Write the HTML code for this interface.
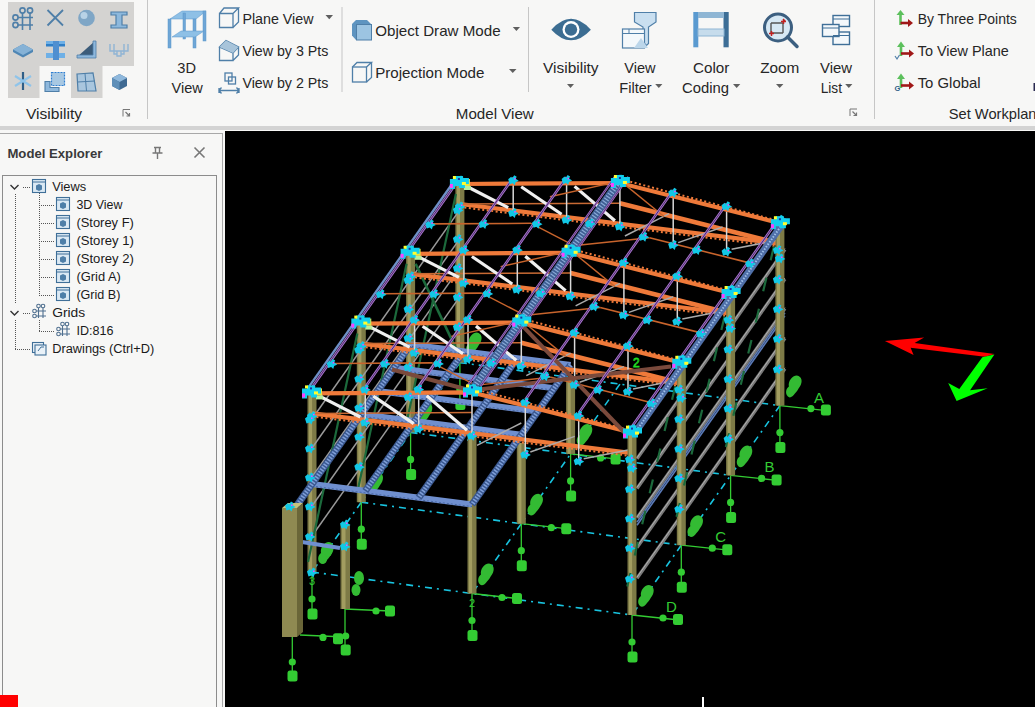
<!DOCTYPE html><html><head><meta charset="utf-8"><style>html,body{margin:0;padding:0;overflow:hidden;background:#f7f7f6}svg{display:block}</style></head><body>
<svg width="1035" height="707" viewBox="0 0 1035 707">
<rect x="0" y="0" width="1035" height="126" fill="#f7f7f6"/><rect x="0" y="126" width="1035" height="4" fill="#d3d3d3"/><rect x="8" y="2" width="126" height="96" fill="#d4d3d1"/><rect x="39.5" y="66" width="31.5" height="32" fill="#f7f7f6"/><rect x="102.5" y="66" width="31.5" height="32" fill="#f7f7f6"/><rect x="147.0" y="0" width="1" height="119" fill="#c6c6c6"/><rect x="341.5" y="7" width="1" height="85" fill="#c6c6c6"/><rect x="528.0" y="7" width="1" height="85" fill="#c6c6c6"/><rect x="874.0" y="0" width="1" height="119" fill="#c6c6c6"/><text x="26" y="118.6" font-family="Liberation Sans" font-size="14.5" fill="#262626" font-weight="normal" textLength="56" lengthAdjust="spacingAndGlyphs" >Visibility</text><text x="455.8" y="118.8" font-family="Liberation Sans" font-size="14.5" fill="#262626" font-weight="normal" textLength="78" lengthAdjust="spacingAndGlyphs" >Model View</text><text x="948.7" y="118.8" font-family="Liberation Sans" font-size="14.5" fill="#262626" font-weight="normal" textLength="96" lengthAdjust="spacingAndGlyphs" >Set Workplane</text><text x="177.3" y="73" font-family="Liberation Sans" font-size="14.5" fill="#262626" font-weight="normal" textLength="18.7" lengthAdjust="spacingAndGlyphs" >3D</text><text x="171.5" y="92.8" font-family="Liberation Sans" font-size="14.5" fill="#262626" font-weight="normal" textLength="31.3" lengthAdjust="spacingAndGlyphs" >View</text><text x="242.4" y="23.8" font-family="Liberation Sans" font-size="14.5" fill="#262626" font-weight="normal" textLength="71.1" lengthAdjust="spacingAndGlyphs" >Plane View</text><text x="242.4" y="56" font-family="Liberation Sans" font-size="14.5" fill="#262626" font-weight="normal" textLength="86" lengthAdjust="spacingAndGlyphs" >View by 3 Pts</text><text x="242.4" y="88" font-family="Liberation Sans" font-size="14.5" fill="#262626" font-weight="normal" textLength="86" lengthAdjust="spacingAndGlyphs" >View by 2 Pts</text><text x="375.2" y="36.1" font-family="Liberation Sans" font-size="14.5" fill="#262626" font-weight="normal" textLength="125.4" lengthAdjust="spacingAndGlyphs" >Object Draw Mode</text><text x="375.2" y="77.9" font-family="Liberation Sans" font-size="14.5" fill="#262626" font-weight="normal" textLength="109.2" lengthAdjust="spacingAndGlyphs" >Projection Mode</text><text x="543" y="73.4" font-family="Liberation Sans" font-size="14.5" fill="#262626" font-weight="normal" textLength="55.6" lengthAdjust="spacingAndGlyphs" >Visibility</text><text x="624.3" y="73.4" font-family="Liberation Sans" font-size="14.5" fill="#262626" font-weight="normal" textLength="31.3" lengthAdjust="spacingAndGlyphs" >View</text><text x="619.3" y="92.8" font-family="Liberation Sans" font-size="14.5" fill="#262626" font-weight="normal" textLength="32.4" lengthAdjust="spacingAndGlyphs" >Filter</text><text x="693" y="73.4" font-family="Liberation Sans" font-size="14.5" fill="#262626" font-weight="normal" textLength="36.3" lengthAdjust="spacingAndGlyphs" >Color</text><text x="682" y="93" font-family="Liberation Sans" font-size="14.5" fill="#262626" font-weight="normal" textLength="47" lengthAdjust="spacingAndGlyphs" >Coding</text><text x="760.2" y="73.4" font-family="Liberation Sans" font-size="14.5" fill="#262626" font-weight="normal" textLength="39.2" lengthAdjust="spacingAndGlyphs" >Zoom</text><text x="820" y="73.4" font-family="Liberation Sans" font-size="14.5" fill="#262626" font-weight="normal" textLength="32" lengthAdjust="spacingAndGlyphs" >View</text><text x="820.7" y="93" font-family="Liberation Sans" font-size="14.5" fill="#262626" font-weight="normal" textLength="21.3" lengthAdjust="spacingAndGlyphs" >List</text><text x="917.7" y="23.9" font-family="Liberation Sans" font-size="14.5" fill="#262626" font-weight="normal" textLength="99.1" lengthAdjust="spacingAndGlyphs" >By Three Points</text><text x="917.7" y="55.7" font-family="Liberation Sans" font-size="14.5" fill="#262626" font-weight="normal" textLength="91.1" lengthAdjust="spacingAndGlyphs" >To View Plane</text><text x="917.7" y="87.9" font-family="Liberation Sans" font-size="14.5" fill="#262626" font-weight="normal" textLength="62.8" lengthAdjust="spacingAndGlyphs" >To Global</text><polygon points="325.5,15 333,15 329.25,19.3" fill="#5f5f5f"/><polygon points="512.8,27 520,27 516.4,31" fill="#5f5f5f"/><polygon points="509,69 516.5,69 512.75,73" fill="#5f5f5f"/><polygon points="567,84 574,84 570.5,88" fill="#5f5f5f"/><polygon points="655.2,84 662.4,84 658.8,88" fill="#5f5f5f"/><polygon points="733,84 740.3,84 736.65,88" fill="#5f5f5f"/><polygon points="776,84 783.4,84 779.7,88" fill="#5f5f5f"/><polygon points="845.2,84 852.4,84 848.8,88" fill="#5f5f5f"/><path d="M123 116.5V109.5H130" fill="none" stroke="#777" stroke-width="1"/><path d="M125.5 112.0L129.5 116.0M129.5 113.0V116.0H126.5" fill="none" stroke="#777" stroke-width="1.2"/><path d="M850 116V109H857" fill="none" stroke="#777" stroke-width="1"/><path d="M852.5 111.5L856.5 115.5M856.5 112.5V115.5H853.5" fill="none" stroke="#777" stroke-width="1.2"/>
<g fill="none" stroke="#4f7fa8" stroke-width="1.6">
 <path d="M17.5 17.5H33M17.5 25H33M22.5 13v17M30 13v17"/>
 <circle cx="22.5" cy="10.5" r="2.6"/><circle cx="30" cy="10.5" r="2.6"/>
 <circle cx="15.5" cy="17.5" r="2.6"/><circle cx="15.5" cy="25" r="2.6"/>
 <path d="M47.5 10L63 25.5M63 10L47.5 25.5" stroke-width="1.8"/>
</g>
<circle cx="86.5" cy="18" r="8.3" fill="#7fa6c6"/><circle cx="84" cy="15.5" r="3.5" fill="#b8d2e6"/>
<path d="M111 12h16v3h-5v10h5v3h-16v-3h5v-10h-5z" fill="#8db8dc" stroke="#4f7fa8" stroke-width="1.2"/>
<path d="M13 49.5L23 44L33 49.5V52L23 57.5L13 52z" fill="#4f86b4"/><path d="M13 49.5L23 44L33 49.5L23 55z" fill="#86b2d6"/>
<rect x="46" y="41" width="19" height="5" fill="#6fb0e6"/><rect x="46" y="44" width="19" height="2.5" fill="#2f7fc8"/><rect x="46" y="53" width="19" height="5" fill="#6fb0e6"/><rect x="53" y="41" width="6" height="19" fill="#4f8fd0"/>
<path d="M77 57L95 41V57z" fill="#3c5c7a"/><path d="M93 41h3v17H77v-3h16z" fill="#8fb8dc" stroke="#4f7fa8" stroke-width="0.8"/>
<path d="M110 44v7h18v-7M114 44v10h3M124 44v10h-3M117 51v5h4v-5" fill="none" stroke="#90b4d4" stroke-width="1.4"/>
<path d="M23 72v18" stroke="#2f5f88" stroke-width="2.2"/><path d="M15 76L31 86M15 86L31 76" stroke="#8fc4ea" stroke-width="2.2"/>
<rect x="51.5" y="72.5" width="13" height="13" fill="#a8c8e2" stroke="#2f7fd0" stroke-width="1.2" stroke-dasharray="2 1"/>
<path d="M45 81.5h5v6h9v4H45z" fill="#8fb8dc" stroke="#4f7fa8" stroke-width="1.1"/>
<path d="M77 74L93 73L96 91L78 91z" fill="#a9c6de" stroke="#4f7fa8" stroke-width="1.2"/><path d="M85 73.5L86.5 91M77.5 82L95 81" stroke="#4f7fa8" stroke-width="1"/>
<path d="M112 78L119.5 74L127 78V86L119.5 90L112 86z" fill="#3f6a92"/><path d="M112 78L119.5 74L127 78L119.5 82z" fill="#8fb8dc"/><path d="M112 78L119.5 82V90L112 86z" fill="#5f8fb8"/>
<!-- 3D view -->
<g fill="#6fa6d6" stroke="#5a96ca" stroke-width="0.5">
<path d="M170 19L182 11H206L196 19z" fill="#8ec0e6"/>
<rect x="168" y="19" width="3" height="29"/><rect x="193" y="19" width="3" height="29"/><rect x="203" y="11" width="3" height="30"/><rect x="183" y="13" width="2.5" height="26"/>
<path d="M172 37L181 31H204L195 37z" fill="#8ec0e6"/>
</g>
<!-- plane view cube -->
<g fill="none" stroke="#4f7fa8" stroke-width="1.3">
<path d="M219.5 13.5h13.5v14h-13.5zM219.5 13.5L224 8h14.5L233 13.5M238.5 8v14L233 27.5"/>
<path d="M219.5 47L226 40.5L238.5 47L233 53zM219.5 47v13.5h13.5V53M238.5 47v8L233 60.5" />
<rect x="225" y="73" width="7" height="8"/><rect x="228.5" y="77" width="7" height="7"/>
<path d="M219 90.5h20M221.5 87.5l-2.5 3 2.5 3M236.5 87.5l2.5 3-2.5 3M219 88v5M239 88v5"/>
</g>
<path d="M219.5 47L226 40.5L238.5 47L233 53z" fill="#a8c4da"/>
<!-- object draw mode -->
<path d="M352 24L356 20H367L371.5 24.5V40H356L352 35.5z" fill="#5e94c0"/><rect x="356.5" y="24.5" width="15" height="15.5" fill="#9cc4e2" stroke="#4f7fa8"/>
<g fill="none" stroke="#4f7fa8" stroke-width="1.3"><rect x="352.5" y="67" width="14" height="15"/><path d="M352.5 67L357 62.5H371.5L366.5 67M371.5 62.5V77.5L366.5 82"/></g>
<!-- eye -->
<path d="M551.3 29.7Q571 8 590.9 29.7Q571 51 551.3 29.7z" fill="#3c6d92"/>
<circle cx="571" cy="29.6" r="8.5" fill="#fff"/><circle cx="571" cy="29.6" r="6.2" fill="#3c6d92"/>
<!-- view filter -->
<path d="M634.5 12.5h21.5v9.5l-7.5 5v16.5l-2 2l-3.5-3.5V27l-8.5-5z" fill="#c9dff0" stroke="#4f7fa8" stroke-width="1.2"/>
<rect x="622.5" y="29" width="22" height="19" fill="#f4f8fb" stroke="#4f7fa8" stroke-width="1.2"/><path d="M622.5 33.5h22M629 29v4.5" stroke="#4f7fa8" stroke-width="1"/>
<path d="M634 48L641 38L648 48z" fill="#bcd6ea"/>
<!-- color coding -->
<rect x="693.3" y="12" width="5" height="35.3" fill="#5a9ad0"/><rect x="723.5" y="12" width="5.2" height="35.3" fill="#3d6e96"/>
<rect x="698" y="12" width="26" height="6" fill="#8fb6d4"/><rect x="698" y="29" width="26" height="7" fill="#c6dcec" stroke="#8fb6d4" stroke-width="1"/>
<!-- zoom -->
<circle cx="778" cy="27.5" r="13.5" fill="#d6e8f4" stroke="#3c5f80" stroke-width="3"/>
<path d="M787.5 37L797 46.5" stroke="#3c5f80" stroke-width="3.5" stroke-linecap="round"/>
<path d="M771 23v10h12M771 23h12v10" fill="none" stroke="#555" stroke-width="1.4"/>
<path d="M785.5 21.5l-2.5-2.5M781 21.5h5M783.5 19v5M769 33.5h5M771.5 31v5" stroke="#c02020" stroke-width="1.5"/>
<!-- view list -->
<g fill="#f4f8fb" stroke="#3f6f98" stroke-width="1.4">
<rect x="833" y="15.5" width="16.5" height="11"/><rect x="833" y="32" width="16.5" height="12.5"/><rect x="822.5" y="24.5" width="16.5" height="12"/>
</g>
<path d="M833 19h16.5M822.5 28h16.5M833 35.5h16.5" stroke="#3f6f98" stroke-width="1.2"/>
<!-- workplane icons -->
<g stroke-width="2.6" fill="none">
<path d="M900.5 25V13" stroke="#5cc05c"/><path d="M900.5 23H909" stroke="#a01818"/>
<path d="M901 56V45" stroke="#5cc05c"/><path d="M901 53.5H910" stroke="#a01818"/>
<path d="M901 88V77" stroke="#5cc05c"/><path d="M901 85.5H910" stroke="#a01818"/>
</g>
<g fill="#5cc05c"><path d="M896.5 15L900.5 10L904.5 15z"/><path d="M897 47L901 41.5L905 47z"/><path d="M897 79L901 73.5L905 79z"/></g>
<g fill="#a01818"><path d="M908 19L913 23L908 27z"/><path d="M909 49.5L914 53.5L909 57.5z"/><path d="M909 81.5L914 85.5L909 89.5z"/></g>
<path d="M895 56l2 3 2.5-4" fill="none" stroke="#4f7fa8" stroke-width="1.2"/>
<text x="894.5" y="90.5" font-family="Liberation Sans" font-size="7.5" font-weight="bold" fill="#2f5f88">G</text>
<rect x="1033.5" y="83" width="1.5" height="8" fill="#2a2a50"/>

<rect x="0" y="130" width="225" height="577" fill="#f7f7f6"/><rect x="0" y="133" width="223" height="1" fill="#a8a8a8"/><rect x="222" y="133" width="1" height="574" fill="#a8a8a8"/><rect x="2" y="175" width="215" height="1" fill="#8c8c8c"/><rect x="2" y="175" width="1" height="532" fill="#8c8c8c"/><rect x="216" y="175" width="1" height="532" fill="#8c8c8c"/><text x="7.4" y="157.9" font-family="Liberation Sans" font-size="13" fill="#3a3a3a" font-weight="bold" textLength="95" lengthAdjust="spacingAndGlyphs" >Model Explorer</text><path d="M154 147.5h7M155.5 147.5v5.5M159.5 147.5v5.5M152.5 153h10M157.5 153v6" fill="none" stroke="#777" stroke-width="1.4"/><path d="M194.5 147.5L204.5 157.5M204.5 147.5L194.5 157.5" stroke="#777" stroke-width="1.6"/><text x="52.2" y="190.8" font-family="Liberation Sans" font-size="12.5" fill="#1a1a1a" font-weight="normal" textLength="34" lengthAdjust="spacingAndGlyphs" >Views</text><rect x="32.5" y="179.5" width="13" height="13" fill="#dbe9f4" stroke="#3f6f98" stroke-width="1.1"/><path d="M32.5 182h13" stroke="#3f6f98" stroke-width="1"/><path d="M36 185.5l3-1.5 3 1.5v4l-3 1.5-3-1.5z" fill="#4f7fa8"/><text x="76.4" y="208.8" font-family="Liberation Sans" font-size="12.5" fill="#1a1a1a" font-weight="normal" textLength="46" lengthAdjust="spacingAndGlyphs" >3D View</text><rect x="56.5" y="197.5" width="13" height="13" fill="#dbe9f4" stroke="#3f6f98" stroke-width="1.1"/><path d="M56.5 200h13" stroke="#3f6f98" stroke-width="1"/><path d="M60 203.5l3-1.5 3 1.5v4l-3 1.5-3-1.5z" fill="#4f7fa8"/><text x="76.4" y="226.8" font-family="Liberation Sans" font-size="12.5" fill="#1a1a1a" font-weight="normal" textLength="57.5" lengthAdjust="spacingAndGlyphs" >(Storey F)</text><rect x="56.5" y="215.5" width="13" height="13" fill="#dbe9f4" stroke="#3f6f98" stroke-width="1.1"/><path d="M56.5 218h13" stroke="#3f6f98" stroke-width="1"/><path d="M60 221.5l3-1.5 3 1.5v4l-3 1.5-3-1.5z" fill="#4f7fa8"/><text x="76.4" y="244.8" font-family="Liberation Sans" font-size="12.5" fill="#1a1a1a" font-weight="normal" textLength="57.5" lengthAdjust="spacingAndGlyphs" >(Storey 1)</text><rect x="56.5" y="233.5" width="13" height="13" fill="#dbe9f4" stroke="#3f6f98" stroke-width="1.1"/><path d="M56.5 236h13" stroke="#3f6f98" stroke-width="1"/><path d="M60 239.5l3-1.5 3 1.5v4l-3 1.5-3-1.5z" fill="#4f7fa8"/><text x="76.4" y="262.8" font-family="Liberation Sans" font-size="12.5" fill="#1a1a1a" font-weight="normal" textLength="57.5" lengthAdjust="spacingAndGlyphs" >(Storey 2)</text><rect x="56.5" y="251.5" width="13" height="13" fill="#dbe9f4" stroke="#3f6f98" stroke-width="1.1"/><path d="M56.5 254h13" stroke="#3f6f98" stroke-width="1"/><path d="M60 257.5l3-1.5 3 1.5v4l-3 1.5-3-1.5z" fill="#4f7fa8"/><text x="76.4" y="280.8" font-family="Liberation Sans" font-size="12.5" fill="#1a1a1a" font-weight="normal" textLength="44.5" lengthAdjust="spacingAndGlyphs" >(Grid A)</text><rect x="56.5" y="269.5" width="13" height="13" fill="#dbe9f4" stroke="#3f6f98" stroke-width="1.1"/><path d="M56.5 272h13" stroke="#3f6f98" stroke-width="1"/><path d="M60 275.5l3-1.5 3 1.5v4l-3 1.5-3-1.5z" fill="#4f7fa8"/><text x="76.4" y="298.8" font-family="Liberation Sans" font-size="12.5" fill="#1a1a1a" font-weight="normal" textLength="44" lengthAdjust="spacingAndGlyphs" >(Grid B)</text><rect x="56.5" y="287.5" width="13" height="13" fill="#dbe9f4" stroke="#3f6f98" stroke-width="1.1"/><path d="M56.5 290h13" stroke="#3f6f98" stroke-width="1"/><path d="M60 293.5l3-1.5 3 1.5v4l-3 1.5-3-1.5z" fill="#4f7fa8"/><text x="52.2" y="316.8" font-family="Liberation Sans" font-size="12.5" fill="#1a1a1a" font-weight="normal" textLength="33" lengthAdjust="spacingAndGlyphs" >Grids</text><g fill="none" stroke="#4f6f8f" stroke-width="1.1"><path d="M36 311h10M36 316h10M38.5 308v10M43 308v10"/><circle cx="38.5" cy="306" r="1.8"/><circle cx="43" cy="306" r="1.8"/><circle cx="34.5" cy="311" r="1.8"/><circle cx="34.5" cy="316" r="1.8"/></g><text x="76.4" y="334.8" font-family="Liberation Sans" font-size="12.5" fill="#1a1a1a" font-weight="normal" textLength="37" lengthAdjust="spacingAndGlyphs" >ID:816</text><g fill="none" stroke="#4f6f8f" stroke-width="1.1"><path d="M60 329h10M60 334h10M62.5 326v10M67 326v10"/><circle cx="62.5" cy="324" r="1.8"/><circle cx="67" cy="324" r="1.8"/><circle cx="58.5" cy="329" r="1.8"/><circle cx="58.5" cy="334" r="1.8"/></g><text x="52.2" y="352.8" font-family="Liberation Sans" font-size="12.5" fill="#1a1a1a" font-weight="normal" textLength="102" lengthAdjust="spacingAndGlyphs" >Drawings (Ctrl+D)</text><g fill="#eaf2f8" stroke="#3f6f98" stroke-width="1.1"><rect x="32.5" y="342.5" width="11" height="10"/><rect x="35" y="345" width="11" height="10"/></g><path d="M38 351l3-4h3" fill="none" stroke="#3f6f98"/><path d="M10.5 185L14.5 189L18.5 185" fill="none" stroke="#333" stroke-width="1.4"/><path d="M10.5 311L14.5 315L18.5 311" fill="none" stroke="#333" stroke-width="1.4"/><g stroke="#555" stroke-width="1" stroke-dasharray="1 1" fill="none"><path d="M23 187.5H31"/><path d="M23 313.5H31"/><path d="M15.5 194V304"/><path d="M15.5 320V350"/><path d="M15 349.5H31"/><path d="M39.5 193V296"/><path d="M39 205.5H55"/><path d="M39 223.5H55"/><path d="M39 241.5H55"/><path d="M39 259.5H55"/><path d="M39 277.5H55"/><path d="M39 295.5H55"/><path d="M39.5 320V332"/><path d="M39 331.5H55"/></g><rect x="0" y="695" width="18" height="12" fill="#ff0000"/>
<rect x="225" y="131" width="810" height="576" fill="#000"/><defs><clipPath id="vpc"><rect x="225" y="131" width="810" height="576"/></clipPath></defs><g clip-path="url(#vpc)" stroke-linecap="butt"><line x1="459.9" y1="362.6" x2="779.9" y2="405.6" stroke="#18c4e0" stroke-width="1.6" stroke-dasharray="7 5 2 5"/><line x1="410.6" y1="432.4" x2="730.6" y2="475.4" stroke="#18c4e0" stroke-width="1.6" stroke-dasharray="7 5 2 5"/><line x1="361.3" y1="502.2" x2="681.3" y2="545.2" stroke="#18c4e0" stroke-width="1.6" stroke-dasharray="7 5 2 5"/><line x1="312.0" y1="572.0" x2="632.0" y2="615.0" stroke="#18c4e0" stroke-width="1.6" stroke-dasharray="7 5 2 5"/><line x1="459.9" y1="362.6" x2="312.0" y2="572.0" stroke="#18c4e0" stroke-width="1.6" stroke-dasharray="7 5 2 5"/><line x1="619.9" y1="384.1" x2="472.0" y2="593.5" stroke="#18c4e0" stroke-width="1.6" stroke-dasharray="7 5 2 5"/><line x1="779.9" y1="405.6" x2="632.0" y2="615.0" stroke="#18c4e0" stroke-width="1.6" stroke-dasharray="7 5 2 5"/><line x1="459.9" y1="362.6" x2="459.9" y2="405.6" stroke="#33cc33" stroke-width="1.3" /><circle cx="459.9" cy="389.6" r="3.6" fill="#33cc33"/><rect x="455.4" y="399.1" width="10" height="11" rx="2.5" fill="#33cc33"/><path d="M467.9 353.6c-3-3-2-8 1-10c-1-5 3-11 8-11c5 1 6 6 3 11c-2 3-3 5-5 7c-2 3-5 5-7 3z" fill="#33bb33"/><line x1="779.9" y1="405.6" x2="779.9" y2="448.6" stroke="#33cc33" stroke-width="1.3" /><circle cx="779.9" cy="432.6" r="3.6" fill="#33cc33"/><rect x="775.4" y="442.1" width="10" height="11" rx="2.5" fill="#33cc33"/><path d="M787.9 396.6c-3-3-2-8 1-10c-1-5 3-11 8-11c5 1 6 6 3 11c-2 3-3 5-5 7c-2 3-5 5-7 3z" fill="#33bb33"/><line x1="410.6" y1="432.4" x2="410.6" y2="475.4" stroke="#33cc33" stroke-width="1.3" /><circle cx="410.6" cy="459.4" r="3.6" fill="#33cc33"/><rect x="406.1" y="468.9" width="10" height="11" rx="2.5" fill="#33cc33"/><path d="M418.6 423.4c-3-3-2-8 1-10c-1-5 3-11 8-11c5 1 6 6 3 11c-2 3-3 5-5 7c-2 3-5 5-7 3z" fill="#33bb33"/><line x1="570.6" y1="453.9" x2="570.6" y2="496.9" stroke="#33cc33" stroke-width="1.3" /><circle cx="570.6" cy="480.9" r="3.6" fill="#33cc33"/><rect x="566.1" y="490.4" width="10" height="11" rx="2.5" fill="#33cc33"/><path d="M578.6 444.9c-3-3-2-8 1-10c-1-5 3-11 8-11c5 1 6 6 3 11c-2 3-3 5-5 7c-2 3-5 5-7 3z" fill="#33bb33"/><line x1="730.6" y1="475.4" x2="730.6" y2="518.4" stroke="#33cc33" stroke-width="1.3" /><circle cx="730.6" cy="502.4" r="3.6" fill="#33cc33"/><rect x="726.1" y="511.9" width="10" height="11" rx="2.5" fill="#33cc33"/><path d="M738.6 466.4c-3-3-2-8 1-10c-1-5 3-11 8-11c5 1 6 6 3 11c-2 3-3 5-5 7c-2 3-5 5-7 3z" fill="#33bb33"/><line x1="361.3" y1="502.2" x2="361.3" y2="545.2" stroke="#33cc33" stroke-width="1.3" /><circle cx="361.3" cy="529.2" r="3.6" fill="#33cc33"/><rect x="356.8" y="538.7" width="10" height="11" rx="2.5" fill="#33cc33"/><path d="M369.3 493.2c-3-3-2-8 1-10c-1-5 3-11 8-11c5 1 6 6 3 11c-2 3-3 5-5 7c-2 3-5 5-7 3z" fill="#33bb33"/><line x1="521.3" y1="523.7" x2="521.3" y2="566.7" stroke="#33cc33" stroke-width="1.3" /><circle cx="521.3" cy="550.7" r="3.6" fill="#33cc33"/><rect x="516.8" y="560.2" width="10" height="11" rx="2.5" fill="#33cc33"/><path d="M529.3 514.7c-3-3-2-8 1-10c-1-5 3-11 8-11c5 1 6 6 3 11c-2 3-3 5-5 7c-2 3-5 5-7 3z" fill="#33bb33"/><line x1="681.3" y1="545.2" x2="681.3" y2="588.2" stroke="#33cc33" stroke-width="1.3" /><circle cx="681.3" cy="572.2" r="3.6" fill="#33cc33"/><rect x="676.8" y="581.7" width="10" height="11" rx="2.5" fill="#33cc33"/><path d="M689.3 536.2c-3-3-2-8 1-10c-1-5 3-11 8-11c5 1 6 6 3 11c-2 3-3 5-5 7c-2 3-5 5-7 3z" fill="#33bb33"/><line x1="312.0" y1="572.0" x2="312.0" y2="615.0" stroke="#33cc33" stroke-width="1.3" /><circle cx="312.0" cy="599.0" r="3.6" fill="#33cc33"/><rect x="307.5" y="608.5" width="10" height="11" rx="2.5" fill="#33cc33"/><path d="M320.0 563.0c-3-3-2-8 1-10c-1-5 3-11 8-11c5 1 6 6 3 11c-2 3-3 5-5 7c-2 3-5 5-7 3z" fill="#33bb33"/><line x1="472.0" y1="593.5" x2="472.0" y2="636.5" stroke="#33cc33" stroke-width="1.3" /><circle cx="472.0" cy="620.5" r="3.6" fill="#33cc33"/><rect x="467.5" y="630.0" width="10" height="11" rx="2.5" fill="#33cc33"/><path d="M480.0 584.5c-3-3-2-8 1-10c-1-5 3-11 8-11c5 1 6 6 3 11c-2 3-3 5-5 7c-2 3-5 5-7 3z" fill="#33bb33"/><line x1="632.0" y1="615.0" x2="632.0" y2="658.0" stroke="#33cc33" stroke-width="1.3" /><circle cx="632.0" cy="642.0" r="3.6" fill="#33cc33"/><rect x="627.5" y="651.5" width="10" height="11" rx="2.5" fill="#33cc33"/><path d="M640.0 606.0c-3-3-2-8 1-10c-1-5 3-11 8-11c5 1 6 6 3 11c-2 3-3 5-5 7c-2 3-5 5-7 3z" fill="#33bb33"/><line x1="570.6" y1="453.9" x2="615.6" y2="458.9" stroke="#33cc33" stroke-width="1.3" /><circle cx="600.6" cy="457.9" r="3.6" fill="#33cc33"/><rect x="610.6" y="453.4" width="10" height="11" rx="2.5" fill="#33cc33"/><line x1="521.3" y1="523.7" x2="566.3" y2="528.7" stroke="#33cc33" stroke-width="1.3" /><circle cx="551.3" cy="527.7" r="3.6" fill="#33cc33"/><rect x="561.3" y="523.2" width="10" height="11" rx="2.5" fill="#33cc33"/><line x1="472.0" y1="593.5" x2="517.0" y2="598.5" stroke="#33cc33" stroke-width="1.3" /><circle cx="502.0" cy="597.5" r="3.6" fill="#33cc33"/><rect x="512.0" y="593.0" width="10" height="11" rx="2.5" fill="#33cc33"/><line x1="779.9" y1="405.6" x2="826.9" y2="410.6" stroke="#33cc33" stroke-width="1.3" /><circle cx="810.9" cy="408.6" r="3.6" fill="#33cc33"/><rect x="820.9" y="404.6" width="10" height="11" rx="2.5" fill="#33cc33"/><text x="813.9" y="402.6" font-family="Liberation Sans" font-size="15" fill="#33cc33">A</text><line x1="730.6" y1="475.4" x2="777.6" y2="480.4" stroke="#33cc33" stroke-width="1.3" /><circle cx="761.6" cy="478.4" r="3.6" fill="#33cc33"/><rect x="771.6" y="474.4" width="10" height="11" rx="2.5" fill="#33cc33"/><text x="764.6" y="472.4" font-family="Liberation Sans" font-size="15" fill="#33cc33">B</text><line x1="681.3" y1="545.2" x2="728.3" y2="550.2" stroke="#33cc33" stroke-width="1.3" /><circle cx="712.3" cy="548.2" r="3.6" fill="#33cc33"/><rect x="722.3" y="544.2" width="10" height="11" rx="2.5" fill="#33cc33"/><text x="715.3" y="542.2" font-family="Liberation Sans" font-size="15" fill="#33cc33">C</text><line x1="632.0" y1="615.0" x2="679.0" y2="620.0" stroke="#33cc33" stroke-width="1.3" /><circle cx="663.0" cy="618.0" r="3.6" fill="#33cc33"/><rect x="673.0" y="614.0" width="10" height="11" rx="2.5" fill="#33cc33"/><text x="666.0" y="612.0" font-family="Liberation Sans" font-size="15" fill="#33cc33">D</text><text x="309.0" y="585.0" font-family="Liberation Sans" font-size="11" fill="#33cc33">3</text><text x="469.0" y="606.5" font-family="Liberation Sans" font-size="11" fill="#33cc33">2</text><text x="633" y="367" font-family="Liberation Sans" font-size="12" fill="none" stroke="#22dd22" stroke-width="0.8">2</text><line x1="292.3" y1="637.0" x2="292.3" y2="680.0" stroke="#33cc33" stroke-width="1.3" /><circle cx="292.3" cy="662.0" r="3.6" fill="#33cc33"/><rect x="287.5" y="670.5" width="10" height="11" rx="2.5" fill="#33cc33"/><line x1="300.0" y1="635.0" x2="345.0" y2="637.0" stroke="#33cc33" stroke-width="1.3" /><circle cx="323.0" cy="637.4" r="3.6" fill="#33cc33"/><rect x="333.0" y="633.3" width="10" height="11" rx="2.5" fill="#33cc33"/><line x1="345.0" y1="609.0" x2="345.0" y2="650.0" stroke="#33cc33" stroke-width="1.3" /><circle cx="345.7" cy="636.0" r="3.6" fill="#33cc33"/><rect x="340.7" y="644.5" width="10" height="11" rx="2.5" fill="#33cc33"/><line x1="345.0" y1="609.0" x2="390.0" y2="611.0" stroke="#33cc33" stroke-width="1.3" /><circle cx="376.0" cy="611.0" r="3.6" fill="#33cc33"/><rect x="385.0" y="605.5" width="10" height="11" rx="2.5" fill="#33cc33"/><ellipse cx="327" cy="551" rx="5.5" ry="6" fill="#33bb33"/><ellipse cx="323" cy="559" rx="4" ry="5" fill="#33bb33"/><ellipse cx="359" cy="578" rx="5" ry="7" fill="#33bb33"/><ellipse cx="356" cy="590" rx="4.5" ry="6" fill="#33bb33"/><rect x="455.4" y="184.0" width="9" height="178.6" fill="#7d7a46"/><rect x="456.9" y="184.0" width="3.1" height="178.6" fill="#a29d60"/><rect x="406.1" y="253.8" width="9" height="178.6" fill="#7d7a46"/><rect x="407.6" y="253.8" width="3.1" height="178.6" fill="#a29d60"/><rect x="356.8" y="323.6" width="9" height="178.6" fill="#7d7a46"/><rect x="358.3" y="323.6" width="3.1" height="178.6" fill="#a29d60"/><rect x="307.5" y="393.4" width="9" height="178.6" fill="#7d7a46"/><rect x="309.0" y="393.4" width="3.1" height="178.6" fill="#a29d60"/><rect x="467.5" y="433.2" width="9" height="160.3" fill="#7d7a46"/><rect x="469.0" y="433.2" width="3.1" height="160.3" fill="#a29d60"/><rect x="516.8" y="442.9" width="9" height="80.8" fill="#7d7a46"/><rect x="518.3" y="442.9" width="3.1" height="80.8" fill="#a29d60"/><rect x="566.1" y="377.1" width="9" height="76.8" fill="#7d7a46"/><rect x="567.6" y="377.1" width="3.1" height="76.8" fill="#a29d60"/><line x1="459.9" y1="326.6" x2="312.0" y2="536.0" stroke="#9a9a9a" stroke-width="1.5" /><line x1="459.9" y1="296.6" x2="312.0" y2="506.0" stroke="#9a9a9a" stroke-width="1.5" /><line x1="459.9" y1="267.6" x2="312.0" y2="477.0" stroke="#9a9a9a" stroke-width="1.5" /><line x1="459.9" y1="238.6" x2="312.0" y2="448.0" stroke="#9a9a9a" stroke-width="1.5" /><line x1="459.9" y1="209.6" x2="312.0" y2="419.0" stroke="#9a9a9a" stroke-width="1.5" /><line x1="455.9" y1="194.0" x2="406.6" y2="422.4" stroke="#1c6a3c" stroke-width="2.2" /><line x1="406.6" y1="263.8" x2="357.3" y2="492.2" stroke="#1c6a3c" stroke-width="2.2" /><line x1="357.3" y1="333.6" x2="308.0" y2="562.0" stroke="#1c6a3c" stroke-width="2.2" /><line x1="415.6" y1="263.8" x2="457.9" y2="352.6" stroke="#1c6a3c" stroke-width="2.6" /><line x1="410.6" y1="344.4" x2="570.6" y2="365.0" stroke="#6f8fcf" stroke-width="6" /><line x1="410.6" y1="346.4" x2="570.6" y2="367.0" stroke="#4a6aa8" stroke-width="1" stroke-dasharray="2 2"/><line x1="394.2" y1="367.7" x2="554.2" y2="388.2" stroke="#6f8fcf" stroke-width="6" /><line x1="394.2" y1="369.7" x2="554.2" y2="390.2" stroke="#4a6aa8" stroke-width="1" stroke-dasharray="2 2"/><line x1="377.7" y1="390.9" x2="537.7" y2="411.5" stroke="#6f8fcf" stroke-width="6" /><line x1="377.7" y1="392.9" x2="537.7" y2="413.5" stroke="#4a6aa8" stroke-width="1" stroke-dasharray="2 2"/><line x1="361.3" y1="414.2" x2="521.3" y2="434.8" stroke="#6f8fcf" stroke-width="6" /><line x1="361.3" y1="416.2" x2="521.3" y2="436.8" stroke="#4a6aa8" stroke-width="1" stroke-dasharray="2 2"/><line x1="312.0" y1="484.0" x2="472.0" y2="504.6" stroke="#6f8fcf" stroke-width="6" /><line x1="312.0" y1="486.0" x2="472.0" y2="506.6" stroke="#4a6aa8" stroke-width="1" stroke-dasharray="2 2"/><line x1="410.6" y1="344.4" x2="291.3" y2="513.3" stroke="#3a5890" stroke-width="7" /><line x1="410.6" y1="344.4" x2="291.3" y2="513.3" stroke="#7f9fd8" stroke-width="4.5" stroke-dasharray="1.5 1.5"/><line x1="463.9" y1="351.3" x2="365.3" y2="490.9" stroke="#3a5890" stroke-width="7" /><line x1="463.9" y1="351.3" x2="365.3" y2="490.9" stroke="#7f9fd8" stroke-width="4.5" stroke-dasharray="1.5 1.5"/><line x1="517.3" y1="358.1" x2="418.7" y2="497.7" stroke="#3a5890" stroke-width="7" /><line x1="517.3" y1="358.1" x2="418.7" y2="497.7" stroke="#7f9fd8" stroke-width="4.5" stroke-dasharray="1.5 1.5"/><line x1="570.6" y1="365.0" x2="472.0" y2="504.6" stroke="#3a5890" stroke-width="7" /><line x1="570.6" y1="365.0" x2="472.0" y2="504.6" stroke="#7f9fd8" stroke-width="4.5" stroke-dasharray="1.5 1.5"/><line x1="784.9" y1="312.7" x2="637.0" y2="522.1" stroke="#5a7ab8" stroke-width="1.6" /><line x1="784.9" y1="315.8" x2="637.0" y2="525.2" stroke="#5a7ab8" stroke-width="1.6" /><line x1="459.9" y1="204.0" x2="779.9" y2="243.7" stroke="#ef7a3a" stroke-width="4.2" /><line x1="459.9" y1="207.0" x2="779.9" y2="246.7" stroke="#ef7a3a" stroke-width="2" stroke-dasharray="2 2.5"/><polyline points="459.9,204.0 619.9,203.2" fill="none" stroke="#c86a34" stroke-width="1.5" /><line x1="619.9" y1="203.2" x2="779.9" y2="243.7" stroke="#ef7a3a" stroke-width="4.5" /><line x1="467.9" y1="187.0" x2="508.2" y2="207.6" stroke="#f0f0f0" stroke-width="3.2" /><line x1="513.2" y1="183.7" x2="513.2" y2="210.6" stroke="#d8d8d8" stroke-width="1.5" /><line x1="521.2" y1="186.7" x2="561.6" y2="214.2" stroke="#f0f0f0" stroke-width="3.2" /><line x1="566.6" y1="183.4" x2="566.6" y2="217.2" stroke="#d8d8d8" stroke-width="1.5" /><line x1="574.6" y1="186.4" x2="614.9" y2="220.8" stroke="#f0f0f0" stroke-width="3.2" /><line x1="619.9" y1="183.0" x2="619.9" y2="223.8" stroke="#d8d8d8" stroke-width="1.5" /><line x1="624.9" y1="236.0" x2="669.2" y2="213.6" stroke="#aaaaaa" stroke-width="1.5" /><line x1="673.2" y1="196.4" x2="673.2" y2="242.6" stroke="#d8d8d8" stroke-width="1.5" /><line x1="678.2" y1="242.6" x2="722.6" y2="227.0" stroke="#aaaaaa" stroke-width="1.5" /><line x1="726.6" y1="209.8" x2="726.6" y2="249.3" stroke="#d8d8d8" stroke-width="1.5" /><line x1="731.6" y1="249.3" x2="775.9" y2="240.5" stroke="#aaaaaa" stroke-width="1.5" /><polyline points="459.9,184.0 619.9,183.0 779.9,223.2" fill="none" stroke="#ef7a3a" stroke-width="4.2" /><line x1="625.9" y1="180.5" x2="775.9" y2="220.2" stroke="#ef7a3a" stroke-width="2" stroke-dasharray="2 2.5"/><line x1="410.6" y1="273.8" x2="730.6" y2="313.5" stroke="#ef7a3a" stroke-width="4.2" /><line x1="410.6" y1="276.8" x2="730.6" y2="316.5" stroke="#ef7a3a" stroke-width="2" stroke-dasharray="2 2.5"/><polyline points="410.6,273.8 570.6,273.0" fill="none" stroke="#c86a34" stroke-width="1.5" /><line x1="570.6" y1="273.0" x2="730.6" y2="313.5" stroke="#ef7a3a" stroke-width="4.5" /><line x1="418.6" y1="256.8" x2="458.9" y2="277.4" stroke="#f0f0f0" stroke-width="3.2" /><line x1="463.9" y1="253.5" x2="463.9" y2="280.4" stroke="#d8d8d8" stroke-width="1.5" /><line x1="471.9" y1="256.5" x2="512.3" y2="284.0" stroke="#f0f0f0" stroke-width="3.2" /><line x1="517.3" y1="253.2" x2="517.3" y2="287.0" stroke="#d8d8d8" stroke-width="1.5" /><line x1="525.3" y1="256.2" x2="565.6" y2="290.6" stroke="#f0f0f0" stroke-width="3.2" /><line x1="570.6" y1="252.8" x2="570.6" y2="293.6" stroke="#d8d8d8" stroke-width="1.5" /><line x1="575.6" y1="305.8" x2="619.9" y2="283.4" stroke="#aaaaaa" stroke-width="1.5" /><line x1="623.9" y1="266.2" x2="623.9" y2="312.4" stroke="#d8d8d8" stroke-width="1.5" /><line x1="628.9" y1="312.4" x2="673.3" y2="296.8" stroke="#aaaaaa" stroke-width="1.5" /><line x1="677.3" y1="279.6" x2="677.3" y2="319.1" stroke="#d8d8d8" stroke-width="1.5" /><line x1="682.3" y1="319.1" x2="726.6" y2="310.3" stroke="#aaaaaa" stroke-width="1.5" /><polyline points="410.6,253.8 570.6,252.8 730.6,293.0" fill="none" stroke="#ef7a3a" stroke-width="4.2" /><line x1="576.6" y1="250.3" x2="726.6" y2="290.0" stroke="#ef7a3a" stroke-width="2" stroke-dasharray="2 2.5"/><line x1="361.3" y1="343.6" x2="681.3" y2="383.3" stroke="#ef7a3a" stroke-width="4.2" /><line x1="361.3" y1="346.6" x2="681.3" y2="386.3" stroke="#ef7a3a" stroke-width="2" stroke-dasharray="2 2.5"/><polyline points="361.3,343.6 521.3,342.8" fill="none" stroke="#c86a34" stroke-width="1.5" /><line x1="521.3" y1="342.8" x2="681.3" y2="383.3" stroke="#ef7a3a" stroke-width="4.5" /><line x1="369.3" y1="326.6" x2="409.6" y2="347.2" stroke="#f0f0f0" stroke-width="3.2" /><line x1="414.6" y1="323.3" x2="414.6" y2="350.2" stroke="#d8d8d8" stroke-width="1.5" /><line x1="422.6" y1="326.3" x2="463.0" y2="353.8" stroke="#f0f0f0" stroke-width="3.2" /><line x1="468.0" y1="323.0" x2="468.0" y2="356.8" stroke="#d8d8d8" stroke-width="1.5" /><line x1="476.0" y1="326.0" x2="516.3" y2="360.4" stroke="#f0f0f0" stroke-width="3.2" /><line x1="521.3" y1="322.6" x2="521.3" y2="363.4" stroke="#d8d8d8" stroke-width="1.5" /><line x1="526.3" y1="375.6" x2="570.6" y2="353.2" stroke="#aaaaaa" stroke-width="1.5" /><line x1="574.6" y1="336.0" x2="574.6" y2="382.2" stroke="#d8d8d8" stroke-width="1.5" /><line x1="579.6" y1="382.2" x2="624.0" y2="366.6" stroke="#aaaaaa" stroke-width="1.5" /><line x1="628.0" y1="349.4" x2="628.0" y2="388.9" stroke="#d8d8d8" stroke-width="1.5" /><line x1="633.0" y1="388.9" x2="677.3" y2="380.1" stroke="#aaaaaa" stroke-width="1.5" /><polyline points="361.3,323.6 521.3,322.6 681.3,362.8" fill="none" stroke="#ef7a3a" stroke-width="4.2" /><line x1="527.3" y1="320.1" x2="677.3" y2="359.8" stroke="#ef7a3a" stroke-width="2" stroke-dasharray="2 2.5"/><line x1="312.0" y1="413.4" x2="632.0" y2="453.1" stroke="#ef7a3a" stroke-width="4.2" /><line x1="312.0" y1="416.4" x2="632.0" y2="456.1" stroke="#ef7a3a" stroke-width="2" stroke-dasharray="2 2.5"/><polyline points="312.0,413.4 472.0,412.6" fill="none" stroke="#c86a34" stroke-width="1.5" /><line x1="320.0" y1="396.4" x2="360.3" y2="417.0" stroke="#f0f0f0" stroke-width="3.2" /><line x1="365.3" y1="393.1" x2="365.3" y2="420.0" stroke="#d8d8d8" stroke-width="1.5" /><line x1="373.3" y1="396.1" x2="413.7" y2="423.6" stroke="#f0f0f0" stroke-width="3.2" /><line x1="418.7" y1="392.8" x2="418.7" y2="426.6" stroke="#d8d8d8" stroke-width="1.5" /><line x1="426.7" y1="395.8" x2="467.0" y2="430.2" stroke="#f0f0f0" stroke-width="3.2" /><line x1="472.0" y1="392.4" x2="472.0" y2="433.2" stroke="#d8d8d8" stroke-width="1.5" /><line x1="477.0" y1="445.4" x2="521.3" y2="423.0" stroke="#aaaaaa" stroke-width="1.5" /><line x1="525.3" y1="405.8" x2="525.3" y2="452.0" stroke="#d8d8d8" stroke-width="1.5" /><line x1="530.3" y1="452.0" x2="574.7" y2="436.4" stroke="#aaaaaa" stroke-width="1.5" /><line x1="578.7" y1="419.2" x2="578.7" y2="458.7" stroke="#d8d8d8" stroke-width="1.5" /><line x1="583.7" y1="458.7" x2="628.0" y2="449.9" stroke="#aaaaaa" stroke-width="1.5" /><polyline points="312.0,393.4 472.0,392.4 632.0,432.6" fill="none" stroke="#ef7a3a" stroke-width="4.2" /><line x1="478.0" y1="389.9" x2="628.0" y2="429.6" stroke="#ef7a3a" stroke-width="2" stroke-dasharray="2 2.5"/><line x1="430.3" y1="223.9" x2="531.1" y2="223.3" stroke="#c8642c" stroke-width="1.6" /><line x1="750.3" y1="263.1" x2="649.5" y2="237.7" stroke="#c8642c" stroke-width="1.6" /><line x1="614.1" y1="182.4" x2="549.9" y2="196.8" stroke="#c8642c" stroke-width="1.4" /><line x1="531.1" y1="223.3" x2="570.7" y2="243.8" stroke="#c8642c" stroke-width="1.4" /><line x1="623.7" y1="183.6" x2="664.3" y2="216.8" stroke="#c8642c" stroke-width="1.4" /><line x1="649.5" y1="237.7" x2="580.3" y2="245.0" stroke="#c8642c" stroke-width="1.4" /><line x1="381.0" y1="293.7" x2="481.8" y2="293.1" stroke="#c8642c" stroke-width="1.6" /><line x1="701.0" y1="332.9" x2="600.2" y2="307.5" stroke="#c8642c" stroke-width="1.6" /><line x1="564.8" y1="252.2" x2="500.6" y2="266.6" stroke="#c8642c" stroke-width="1.4" /><line x1="481.8" y1="293.1" x2="521.4" y2="313.6" stroke="#c8642c" stroke-width="1.4" /><line x1="574.4" y1="253.4" x2="615.0" y2="286.6" stroke="#c8642c" stroke-width="1.4" /><line x1="600.2" y1="307.5" x2="531.0" y2="314.8" stroke="#c8642c" stroke-width="1.4" /><line x1="331.7" y1="363.5" x2="432.5" y2="362.9" stroke="#c8642c" stroke-width="1.6" /><line x1="651.7" y1="402.7" x2="550.9" y2="377.3" stroke="#c8642c" stroke-width="1.6" /><line x1="515.5" y1="322.0" x2="451.3" y2="336.4" stroke="#c8642c" stroke-width="1.4" /><line x1="432.5" y1="362.9" x2="472.1" y2="383.4" stroke="#c8642c" stroke-width="1.4" /><line x1="525.1" y1="323.2" x2="565.7" y2="356.4" stroke="#c8642c" stroke-width="1.4" /><line x1="550.9" y1="377.3" x2="481.7" y2="384.6" stroke="#c8642c" stroke-width="1.4" /><line x1="521.3" y1="324.6" x2="625.0" y2="433.0" stroke="#7a4a3c" stroke-width="4" /><line x1="392.0" y1="369.5" x2="471.0" y2="390.5" stroke="#7a4a3c" stroke-width="4" /><line x1="471.0" y1="390.5" x2="671.0" y2="366.4" stroke="#7a4a3c" stroke-width="4" /><line x1="784.9" y1="368.8" x2="637.0" y2="578.2" stroke="#7a7a7a" stroke-width="3.4" /><line x1="784.9" y1="367.8" x2="637.0" y2="577.2" stroke="#b0b0b0" stroke-width="1" /><line x1="784.9" y1="338.2" x2="637.0" y2="547.6" stroke="#7a7a7a" stroke-width="3.4" /><line x1="784.9" y1="337.2" x2="637.0" y2="546.6" stroke="#b0b0b0" stroke-width="1" /><line x1="784.9" y1="308.6" x2="637.0" y2="518.0" stroke="#7a7a7a" stroke-width="3.4" /><line x1="784.9" y1="307.6" x2="637.0" y2="517.0" stroke="#b0b0b0" stroke-width="1" /><line x1="784.9" y1="279.0" x2="637.0" y2="488.4" stroke="#7a7a7a" stroke-width="3.4" /><line x1="784.9" y1="278.0" x2="637.0" y2="487.4" stroke="#b0b0b0" stroke-width="1" /><line x1="784.9" y1="249.4" x2="637.0" y2="458.8" stroke="#7a7a7a" stroke-width="3.4" /><line x1="784.9" y1="248.4" x2="637.0" y2="457.8" stroke="#b0b0b0" stroke-width="1" /><rect x="775.4" y="223.2" width="9" height="182.4" fill="#7d7a46"/><rect x="776.9" y="223.2" width="3.1" height="182.4" fill="#a29d60"/><rect x="726.1" y="293.0" width="9" height="182.4" fill="#7d7a46"/><rect x="727.6" y="293.0" width="3.1" height="182.4" fill="#a29d60"/><rect x="676.8" y="362.8" width="9" height="182.4" fill="#7d7a46"/><rect x="678.3" y="362.8" width="3.1" height="182.4" fill="#a29d60"/><rect x="627.5" y="432.6" width="9" height="182.4" fill="#7d7a46"/><rect x="629.0" y="432.6" width="3.1" height="182.4" fill="#a29d60"/><line x1="773.9" y1="246.6" x2="724.6" y2="452.1" stroke="#1c6a3c" stroke-width="2.2" stroke-dasharray="14 18"/><line x1="724.6" y1="316.4" x2="675.3" y2="521.9" stroke="#1c6a3c" stroke-width="2.2" stroke-dasharray="14 18"/><line x1="675.3" y1="386.2" x2="626.0" y2="591.7" stroke="#1c6a3c" stroke-width="2.2" stroke-dasharray="14 18"/><line x1="456.4" y1="178.0" x2="308.5" y2="387.4" stroke="#6f90c8" stroke-width="2.4" /><line x1="459.9" y1="178.0" x2="312.0" y2="387.4" stroke="#a874d0" stroke-width="2.6" /><line x1="459.9" y1="178.0" x2="312.0" y2="387.4" stroke="#3a2050" stroke-width="0.8" /><line x1="513.2" y1="177.7" x2="365.3" y2="387.1" stroke="#a874d0" stroke-width="2.6" /><line x1="513.2" y1="177.7" x2="365.3" y2="387.1" stroke="#3a2050" stroke-width="0.8" /><line x1="566.6" y1="177.3" x2="418.7" y2="386.7" stroke="#a874d0" stroke-width="2.6" /><line x1="566.6" y1="177.3" x2="418.7" y2="386.7" stroke="#3a2050" stroke-width="0.8" /><line x1="622.4" y1="176.9" x2="474.5" y2="386.3" stroke="#3f5f94" stroke-width="8" /><line x1="622.4" y1="176.9" x2="474.5" y2="386.3" stroke="#8aaad8" stroke-width="5.5" stroke-dasharray="1.2 1.8"/><line x1="614.9" y1="176.9" x2="467.0" y2="386.3" stroke="#a874d0" stroke-width="2.2" /><line x1="614.9" y1="176.9" x2="467.0" y2="386.3" stroke="#3a2050" stroke-width="0.7" /><line x1="628.4" y1="176.9" x2="480.5" y2="386.3" stroke="#a874d0" stroke-width="2.2" /><line x1="628.4" y1="176.9" x2="480.5" y2="386.3" stroke="#3a2050" stroke-width="0.7" /><line x1="673.2" y1="190.3" x2="525.3" y2="399.7" stroke="#a874d0" stroke-width="2.6" /><line x1="673.2" y1="190.3" x2="525.3" y2="399.7" stroke="#3a2050" stroke-width="0.8" /><line x1="726.6" y1="203.7" x2="578.7" y2="413.1" stroke="#a874d0" stroke-width="2.6" /><line x1="726.6" y1="203.7" x2="578.7" y2="413.1" stroke="#3a2050" stroke-width="0.8" /><line x1="785.9" y1="219.1" x2="638.0" y2="428.5" stroke="#4f6fa8" stroke-width="7" /><line x1="785.9" y1="219.1" x2="638.0" y2="428.5" stroke="#9fbfe8" stroke-width="2" stroke-dasharray="1.5 1.5"/><line x1="779.9" y1="217.1" x2="632.0" y2="426.5" stroke="#a874d0" stroke-width="2.6" /><line x1="779.9" y1="217.1" x2="632.0" y2="426.5" stroke="#3a2050" stroke-width="0.8" /><g transform="translate(459.9,180.0)"><path d="M-5 -0.5l3-2.5 1 1.5 2-3 2.5 1.5-1 2 3 2-3 1.5-1 3-2-2-3 1z" fill="#12c8e6"/><rect x="1" y="-1.5" width="1.5" height="1.5" fill="#ff40ff"/></g><g transform="translate(459.9,206.0)"><path d="M-5 -0.5l3-2.5 1 1.5 2-3 2.5 1.5-1 2 3 2-3 1.5-1 3-2-2-3 1z" fill="#12c8e6"/><rect x="1" y="-1.5" width="1.5" height="1.5" fill="#ff40ff"/></g><g transform="translate(513.2,179.7)"><path d="M-5 -0.5l3-2.5 1 1.5 2-3 2.5 1.5-1 2 3 2-3 1.5-1 3-2-2-3 1z" fill="#12c8e6"/><rect x="1" y="-1.5" width="1.5" height="1.5" fill="#ff40ff"/></g><g transform="translate(513.2,212.6)"><path d="M-5 -0.5l3-2.5 1 1.5 2-3 2.5 1.5-1 2 3 2-3 1.5-1 3-2-2-3 1z" fill="#12c8e6"/><rect x="1" y="-1.5" width="1.5" height="1.5" fill="#ff40ff"/></g><g transform="translate(566.6,179.4)"><path d="M-5 -0.5l3-2.5 1 1.5 2-3 2.5 1.5-1 2 3 2-3 1.5-1 3-2-2-3 1z" fill="#12c8e6"/><rect x="1" y="-1.5" width="1.5" height="1.5" fill="#ff40ff"/></g><g transform="translate(566.6,219.2)"><path d="M-5 -0.5l3-2.5 1 1.5 2-3 2.5 1.5-1 2 3 2-3 1.5-1 3-2-2-3 1z" fill="#12c8e6"/><rect x="1" y="-1.5" width="1.5" height="1.5" fill="#ff40ff"/></g><g transform="translate(619.9,179.0)"><path d="M-5 -0.5l3-2.5 1 1.5 2-3 2.5 1.5-1 2 3 2-3 1.5-1 3-2-2-3 1z" fill="#12c8e6"/><rect x="1" y="-1.5" width="1.5" height="1.5" fill="#ff40ff"/></g><g transform="translate(619.9,225.9)"><path d="M-5 -0.5l3-2.5 1 1.5 2-3 2.5 1.5-1 2 3 2-3 1.5-1 3-2-2-3 1z" fill="#12c8e6"/><rect x="1" y="-1.5" width="1.5" height="1.5" fill="#ff40ff"/></g><g transform="translate(673.2,192.3)"><path d="M-5 -0.5l3-2.5 1 1.5 2-3 2.5 1.5-1 2 3 2-3 1.5-1 3-2-2-3 1z" fill="#12c8e6"/><rect x="1" y="-1.5" width="1.5" height="1.5" fill="#ff40ff"/></g><g transform="translate(673.2,244.6)"><path d="M-5 -0.5l3-2.5 1 1.5 2-3 2.5 1.5-1 2 3 2-3 1.5-1 3-2-2-3 1z" fill="#12c8e6"/><rect x="1" y="-1.5" width="1.5" height="1.5" fill="#ff40ff"/></g><g transform="translate(726.6,205.7)"><path d="M-5 -0.5l3-2.5 1 1.5 2-3 2.5 1.5-1 2 3 2-3 1.5-1 3-2-2-3 1z" fill="#12c8e6"/><rect x="1" y="-1.5" width="1.5" height="1.5" fill="#ff40ff"/></g><g transform="translate(726.6,251.3)"><path d="M-5 -0.5l3-2.5 1 1.5 2-3 2.5 1.5-1 2 3 2-3 1.5-1 3-2-2-3 1z" fill="#12c8e6"/><rect x="1" y="-1.5" width="1.5" height="1.5" fill="#ff40ff"/></g><g transform="translate(779.9,219.2)"><path d="M-5 -0.5l3-2.5 1 1.5 2-3 2.5 1.5-1 2 3 2-3 1.5-1 3-2-2-3 1z" fill="#12c8e6"/><rect x="1" y="-1.5" width="1.5" height="1.5" fill="#ff40ff"/></g><g transform="translate(779.9,258.0)"><path d="M-5 -0.5l3-2.5 1 1.5 2-3 2.5 1.5-1 2 3 2-3 1.5-1 3-2-2-3 1z" fill="#12c8e6"/><rect x="1" y="-1.5" width="1.5" height="1.5" fill="#ff40ff"/></g><g transform="translate(777.9,368.8)"><path d="M-5 -0.5l3-2.5 1 1.5 2-3 2.5 1.5-1 2 3 2-3 1.5-1 3-2-2-3 1z" fill="#12c8e6"/><rect x="1" y="-1.5" width="1.5" height="1.5" fill="#ff40ff"/></g><g transform="translate(457.9,326.6)"><path d="M-5 -0.5l3-2.5 1 1.5 2-3 2.5 1.5-1 2 3 2-3 1.5-1 3-2-2-3 1z" fill="#12c8e6"/><rect x="1" y="-1.5" width="1.5" height="1.5" fill="#ff40ff"/></g><g transform="translate(777.9,338.2)"><path d="M-5 -0.5l3-2.5 1 1.5 2-3 2.5 1.5-1 2 3 2-3 1.5-1 3-2-2-3 1z" fill="#12c8e6"/><rect x="1" y="-1.5" width="1.5" height="1.5" fill="#ff40ff"/></g><g transform="translate(457.9,296.6)"><path d="M-5 -0.5l3-2.5 1 1.5 2-3 2.5 1.5-1 2 3 2-3 1.5-1 3-2-2-3 1z" fill="#12c8e6"/><rect x="1" y="-1.5" width="1.5" height="1.5" fill="#ff40ff"/></g><g transform="translate(777.9,308.6)"><path d="M-5 -0.5l3-2.5 1 1.5 2-3 2.5 1.5-1 2 3 2-3 1.5-1 3-2-2-3 1z" fill="#12c8e6"/><rect x="1" y="-1.5" width="1.5" height="1.5" fill="#ff40ff"/></g><g transform="translate(457.9,267.6)"><path d="M-5 -0.5l3-2.5 1 1.5 2-3 2.5 1.5-1 2 3 2-3 1.5-1 3-2-2-3 1z" fill="#12c8e6"/><rect x="1" y="-1.5" width="1.5" height="1.5" fill="#ff40ff"/></g><g transform="translate(777.9,279.0)"><path d="M-5 -0.5l3-2.5 1 1.5 2-3 2.5 1.5-1 2 3 2-3 1.5-1 3-2-2-3 1z" fill="#12c8e6"/><rect x="1" y="-1.5" width="1.5" height="1.5" fill="#ff40ff"/></g><g transform="translate(457.9,238.6)"><path d="M-5 -0.5l3-2.5 1 1.5 2-3 2.5 1.5-1 2 3 2-3 1.5-1 3-2-2-3 1z" fill="#12c8e6"/><rect x="1" y="-1.5" width="1.5" height="1.5" fill="#ff40ff"/></g><g transform="translate(777.9,249.4)"><path d="M-5 -0.5l3-2.5 1 1.5 2-3 2.5 1.5-1 2 3 2-3 1.5-1 3-2-2-3 1z" fill="#12c8e6"/><rect x="1" y="-1.5" width="1.5" height="1.5" fill="#ff40ff"/></g><g transform="translate(457.9,209.6)"><path d="M-5 -0.5l3-2.5 1 1.5 2-3 2.5 1.5-1 2 3 2-3 1.5-1 3-2-2-3 1z" fill="#12c8e6"/><rect x="1" y="-1.5" width="1.5" height="1.5" fill="#ff40ff"/></g><g transform="translate(410.6,249.8)"><path d="M-5 -0.5l3-2.5 1 1.5 2-3 2.5 1.5-1 2 3 2-3 1.5-1 3-2-2-3 1z" fill="#12c8e6"/><rect x="1" y="-1.5" width="1.5" height="1.5" fill="#ff40ff"/></g><g transform="translate(410.6,275.8)"><path d="M-5 -0.5l3-2.5 1 1.5 2-3 2.5 1.5-1 2 3 2-3 1.5-1 3-2-2-3 1z" fill="#12c8e6"/><rect x="1" y="-1.5" width="1.5" height="1.5" fill="#ff40ff"/></g><g transform="translate(463.9,249.5)"><path d="M-5 -0.5l3-2.5 1 1.5 2-3 2.5 1.5-1 2 3 2-3 1.5-1 3-2-2-3 1z" fill="#12c8e6"/><rect x="1" y="-1.5" width="1.5" height="1.5" fill="#ff40ff"/></g><g transform="translate(463.9,282.4)"><path d="M-5 -0.5l3-2.5 1 1.5 2-3 2.5 1.5-1 2 3 2-3 1.5-1 3-2-2-3 1z" fill="#12c8e6"/><rect x="1" y="-1.5" width="1.5" height="1.5" fill="#ff40ff"/></g><g transform="translate(517.3,249.2)"><path d="M-5 -0.5l3-2.5 1 1.5 2-3 2.5 1.5-1 2 3 2-3 1.5-1 3-2-2-3 1z" fill="#12c8e6"/><rect x="1" y="-1.5" width="1.5" height="1.5" fill="#ff40ff"/></g><g transform="translate(517.3,289.0)"><path d="M-5 -0.5l3-2.5 1 1.5 2-3 2.5 1.5-1 2 3 2-3 1.5-1 3-2-2-3 1z" fill="#12c8e6"/><rect x="1" y="-1.5" width="1.5" height="1.5" fill="#ff40ff"/></g><g transform="translate(570.6,248.8)"><path d="M-5 -0.5l3-2.5 1 1.5 2-3 2.5 1.5-1 2 3 2-3 1.5-1 3-2-2-3 1z" fill="#12c8e6"/><rect x="1" y="-1.5" width="1.5" height="1.5" fill="#ff40ff"/></g><g transform="translate(570.6,295.7)"><path d="M-5 -0.5l3-2.5 1 1.5 2-3 2.5 1.5-1 2 3 2-3 1.5-1 3-2-2-3 1z" fill="#12c8e6"/><rect x="1" y="-1.5" width="1.5" height="1.5" fill="#ff40ff"/></g><g transform="translate(623.9,262.1)"><path d="M-5 -0.5l3-2.5 1 1.5 2-3 2.5 1.5-1 2 3 2-3 1.5-1 3-2-2-3 1z" fill="#12c8e6"/><rect x="1" y="-1.5" width="1.5" height="1.5" fill="#ff40ff"/></g><g transform="translate(623.9,314.4)"><path d="M-5 -0.5l3-2.5 1 1.5 2-3 2.5 1.5-1 2 3 2-3 1.5-1 3-2-2-3 1z" fill="#12c8e6"/><rect x="1" y="-1.5" width="1.5" height="1.5" fill="#ff40ff"/></g><g transform="translate(677.3,275.5)"><path d="M-5 -0.5l3-2.5 1 1.5 2-3 2.5 1.5-1 2 3 2-3 1.5-1 3-2-2-3 1z" fill="#12c8e6"/><rect x="1" y="-1.5" width="1.5" height="1.5" fill="#ff40ff"/></g><g transform="translate(677.3,321.1)"><path d="M-5 -0.5l3-2.5 1 1.5 2-3 2.5 1.5-1 2 3 2-3 1.5-1 3-2-2-3 1z" fill="#12c8e6"/><rect x="1" y="-1.5" width="1.5" height="1.5" fill="#ff40ff"/></g><g transform="translate(730.6,289.0)"><path d="M-5 -0.5l3-2.5 1 1.5 2-3 2.5 1.5-1 2 3 2-3 1.5-1 3-2-2-3 1z" fill="#12c8e6"/><rect x="1" y="-1.5" width="1.5" height="1.5" fill="#ff40ff"/></g><g transform="translate(730.6,327.8)"><path d="M-5 -0.5l3-2.5 1 1.5 2-3 2.5 1.5-1 2 3 2-3 1.5-1 3-2-2-3 1z" fill="#12c8e6"/><rect x="1" y="-1.5" width="1.5" height="1.5" fill="#ff40ff"/></g><g transform="translate(728.6,438.6)"><path d="M-5 -0.5l3-2.5 1 1.5 2-3 2.5 1.5-1 2 3 2-3 1.5-1 3-2-2-3 1z" fill="#12c8e6"/><rect x="1" y="-1.5" width="1.5" height="1.5" fill="#ff40ff"/></g><g transform="translate(408.6,396.4)"><path d="M-5 -0.5l3-2.5 1 1.5 2-3 2.5 1.5-1 2 3 2-3 1.5-1 3-2-2-3 1z" fill="#12c8e6"/><rect x="1" y="-1.5" width="1.5" height="1.5" fill="#ff40ff"/></g><g transform="translate(728.6,408.0)"><path d="M-5 -0.5l3-2.5 1 1.5 2-3 2.5 1.5-1 2 3 2-3 1.5-1 3-2-2-3 1z" fill="#12c8e6"/><rect x="1" y="-1.5" width="1.5" height="1.5" fill="#ff40ff"/></g><g transform="translate(408.6,366.4)"><path d="M-5 -0.5l3-2.5 1 1.5 2-3 2.5 1.5-1 2 3 2-3 1.5-1 3-2-2-3 1z" fill="#12c8e6"/><rect x="1" y="-1.5" width="1.5" height="1.5" fill="#ff40ff"/></g><g transform="translate(728.6,378.4)"><path d="M-5 -0.5l3-2.5 1 1.5 2-3 2.5 1.5-1 2 3 2-3 1.5-1 3-2-2-3 1z" fill="#12c8e6"/><rect x="1" y="-1.5" width="1.5" height="1.5" fill="#ff40ff"/></g><g transform="translate(408.6,337.4)"><path d="M-5 -0.5l3-2.5 1 1.5 2-3 2.5 1.5-1 2 3 2-3 1.5-1 3-2-2-3 1z" fill="#12c8e6"/><rect x="1" y="-1.5" width="1.5" height="1.5" fill="#ff40ff"/></g><g transform="translate(728.6,348.8)"><path d="M-5 -0.5l3-2.5 1 1.5 2-3 2.5 1.5-1 2 3 2-3 1.5-1 3-2-2-3 1z" fill="#12c8e6"/><rect x="1" y="-1.5" width="1.5" height="1.5" fill="#ff40ff"/></g><g transform="translate(408.6,308.4)"><path d="M-5 -0.5l3-2.5 1 1.5 2-3 2.5 1.5-1 2 3 2-3 1.5-1 3-2-2-3 1z" fill="#12c8e6"/><rect x="1" y="-1.5" width="1.5" height="1.5" fill="#ff40ff"/></g><g transform="translate(728.6,319.2)"><path d="M-5 -0.5l3-2.5 1 1.5 2-3 2.5 1.5-1 2 3 2-3 1.5-1 3-2-2-3 1z" fill="#12c8e6"/><rect x="1" y="-1.5" width="1.5" height="1.5" fill="#ff40ff"/></g><g transform="translate(408.6,279.4)"><path d="M-5 -0.5l3-2.5 1 1.5 2-3 2.5 1.5-1 2 3 2-3 1.5-1 3-2-2-3 1z" fill="#12c8e6"/><rect x="1" y="-1.5" width="1.5" height="1.5" fill="#ff40ff"/></g><g transform="translate(361.3,319.6)"><path d="M-5 -0.5l3-2.5 1 1.5 2-3 2.5 1.5-1 2 3 2-3 1.5-1 3-2-2-3 1z" fill="#12c8e6"/><rect x="1" y="-1.5" width="1.5" height="1.5" fill="#ff40ff"/></g><g transform="translate(361.3,345.6)"><path d="M-5 -0.5l3-2.5 1 1.5 2-3 2.5 1.5-1 2 3 2-3 1.5-1 3-2-2-3 1z" fill="#12c8e6"/><rect x="1" y="-1.5" width="1.5" height="1.5" fill="#ff40ff"/></g><g transform="translate(414.6,319.3)"><path d="M-5 -0.5l3-2.5 1 1.5 2-3 2.5 1.5-1 2 3 2-3 1.5-1 3-2-2-3 1z" fill="#12c8e6"/><rect x="1" y="-1.5" width="1.5" height="1.5" fill="#ff40ff"/></g><g transform="translate(414.6,352.2)"><path d="M-5 -0.5l3-2.5 1 1.5 2-3 2.5 1.5-1 2 3 2-3 1.5-1 3-2-2-3 1z" fill="#12c8e6"/><rect x="1" y="-1.5" width="1.5" height="1.5" fill="#ff40ff"/></g><g transform="translate(468.0,319.0)"><path d="M-5 -0.5l3-2.5 1 1.5 2-3 2.5 1.5-1 2 3 2-3 1.5-1 3-2-2-3 1z" fill="#12c8e6"/><rect x="1" y="-1.5" width="1.5" height="1.5" fill="#ff40ff"/></g><g transform="translate(468.0,358.8)"><path d="M-5 -0.5l3-2.5 1 1.5 2-3 2.5 1.5-1 2 3 2-3 1.5-1 3-2-2-3 1z" fill="#12c8e6"/><rect x="1" y="-1.5" width="1.5" height="1.5" fill="#ff40ff"/></g><g transform="translate(521.3,318.6)"><path d="M-5 -0.5l3-2.5 1 1.5 2-3 2.5 1.5-1 2 3 2-3 1.5-1 3-2-2-3 1z" fill="#12c8e6"/><rect x="1" y="-1.5" width="1.5" height="1.5" fill="#ff40ff"/></g><g transform="translate(521.3,365.5)"><path d="M-5 -0.5l3-2.5 1 1.5 2-3 2.5 1.5-1 2 3 2-3 1.5-1 3-2-2-3 1z" fill="#12c8e6"/><rect x="1" y="-1.5" width="1.5" height="1.5" fill="#ff40ff"/></g><g transform="translate(574.6,331.9)"><path d="M-5 -0.5l3-2.5 1 1.5 2-3 2.5 1.5-1 2 3 2-3 1.5-1 3-2-2-3 1z" fill="#12c8e6"/><rect x="1" y="-1.5" width="1.5" height="1.5" fill="#ff40ff"/></g><g transform="translate(574.6,384.2)"><path d="M-5 -0.5l3-2.5 1 1.5 2-3 2.5 1.5-1 2 3 2-3 1.5-1 3-2-2-3 1z" fill="#12c8e6"/><rect x="1" y="-1.5" width="1.5" height="1.5" fill="#ff40ff"/></g><g transform="translate(628.0,345.3)"><path d="M-5 -0.5l3-2.5 1 1.5 2-3 2.5 1.5-1 2 3 2-3 1.5-1 3-2-2-3 1z" fill="#12c8e6"/><rect x="1" y="-1.5" width="1.5" height="1.5" fill="#ff40ff"/></g><g transform="translate(628.0,390.9)"><path d="M-5 -0.5l3-2.5 1 1.5 2-3 2.5 1.5-1 2 3 2-3 1.5-1 3-2-2-3 1z" fill="#12c8e6"/><rect x="1" y="-1.5" width="1.5" height="1.5" fill="#ff40ff"/></g><g transform="translate(681.3,358.8)"><path d="M-5 -0.5l3-2.5 1 1.5 2-3 2.5 1.5-1 2 3 2-3 1.5-1 3-2-2-3 1z" fill="#12c8e6"/><rect x="1" y="-1.5" width="1.5" height="1.5" fill="#ff40ff"/></g><g transform="translate(681.3,397.6)"><path d="M-5 -0.5l3-2.5 1 1.5 2-3 2.5 1.5-1 2 3 2-3 1.5-1 3-2-2-3 1z" fill="#12c8e6"/><rect x="1" y="-1.5" width="1.5" height="1.5" fill="#ff40ff"/></g><g transform="translate(679.3,508.4)"><path d="M-5 -0.5l3-2.5 1 1.5 2-3 2.5 1.5-1 2 3 2-3 1.5-1 3-2-2-3 1z" fill="#12c8e6"/><rect x="1" y="-1.5" width="1.5" height="1.5" fill="#ff40ff"/></g><g transform="translate(359.3,466.2)"><path d="M-5 -0.5l3-2.5 1 1.5 2-3 2.5 1.5-1 2 3 2-3 1.5-1 3-2-2-3 1z" fill="#12c8e6"/><rect x="1" y="-1.5" width="1.5" height="1.5" fill="#ff40ff"/></g><g transform="translate(679.3,477.8)"><path d="M-5 -0.5l3-2.5 1 1.5 2-3 2.5 1.5-1 2 3 2-3 1.5-1 3-2-2-3 1z" fill="#12c8e6"/><rect x="1" y="-1.5" width="1.5" height="1.5" fill="#ff40ff"/></g><g transform="translate(359.3,436.2)"><path d="M-5 -0.5l3-2.5 1 1.5 2-3 2.5 1.5-1 2 3 2-3 1.5-1 3-2-2-3 1z" fill="#12c8e6"/><rect x="1" y="-1.5" width="1.5" height="1.5" fill="#ff40ff"/></g><g transform="translate(679.3,448.2)"><path d="M-5 -0.5l3-2.5 1 1.5 2-3 2.5 1.5-1 2 3 2-3 1.5-1 3-2-2-3 1z" fill="#12c8e6"/><rect x="1" y="-1.5" width="1.5" height="1.5" fill="#ff40ff"/></g><g transform="translate(359.3,407.2)"><path d="M-5 -0.5l3-2.5 1 1.5 2-3 2.5 1.5-1 2 3 2-3 1.5-1 3-2-2-3 1z" fill="#12c8e6"/><rect x="1" y="-1.5" width="1.5" height="1.5" fill="#ff40ff"/></g><g transform="translate(679.3,418.6)"><path d="M-5 -0.5l3-2.5 1 1.5 2-3 2.5 1.5-1 2 3 2-3 1.5-1 3-2-2-3 1z" fill="#12c8e6"/><rect x="1" y="-1.5" width="1.5" height="1.5" fill="#ff40ff"/></g><g transform="translate(359.3,378.2)"><path d="M-5 -0.5l3-2.5 1 1.5 2-3 2.5 1.5-1 2 3 2-3 1.5-1 3-2-2-3 1z" fill="#12c8e6"/><rect x="1" y="-1.5" width="1.5" height="1.5" fill="#ff40ff"/></g><g transform="translate(679.3,389.0)"><path d="M-5 -0.5l3-2.5 1 1.5 2-3 2.5 1.5-1 2 3 2-3 1.5-1 3-2-2-3 1z" fill="#12c8e6"/><rect x="1" y="-1.5" width="1.5" height="1.5" fill="#ff40ff"/></g><g transform="translate(359.3,349.2)"><path d="M-5 -0.5l3-2.5 1 1.5 2-3 2.5 1.5-1 2 3 2-3 1.5-1 3-2-2-3 1z" fill="#12c8e6"/><rect x="1" y="-1.5" width="1.5" height="1.5" fill="#ff40ff"/></g><g transform="translate(312.0,389.4)"><path d="M-5 -0.5l3-2.5 1 1.5 2-3 2.5 1.5-1 2 3 2-3 1.5-1 3-2-2-3 1z" fill="#12c8e6"/><rect x="1" y="-1.5" width="1.5" height="1.5" fill="#ff40ff"/></g><g transform="translate(312.0,415.4)"><path d="M-5 -0.5l3-2.5 1 1.5 2-3 2.5 1.5-1 2 3 2-3 1.5-1 3-2-2-3 1z" fill="#12c8e6"/><rect x="1" y="-1.5" width="1.5" height="1.5" fill="#ff40ff"/></g><g transform="translate(365.3,389.1)"><path d="M-5 -0.5l3-2.5 1 1.5 2-3 2.5 1.5-1 2 3 2-3 1.5-1 3-2-2-3 1z" fill="#12c8e6"/><rect x="1" y="-1.5" width="1.5" height="1.5" fill="#ff40ff"/></g><g transform="translate(365.3,422.0)"><path d="M-5 -0.5l3-2.5 1 1.5 2-3 2.5 1.5-1 2 3 2-3 1.5-1 3-2-2-3 1z" fill="#12c8e6"/><rect x="1" y="-1.5" width="1.5" height="1.5" fill="#ff40ff"/></g><g transform="translate(418.7,388.8)"><path d="M-5 -0.5l3-2.5 1 1.5 2-3 2.5 1.5-1 2 3 2-3 1.5-1 3-2-2-3 1z" fill="#12c8e6"/><rect x="1" y="-1.5" width="1.5" height="1.5" fill="#ff40ff"/></g><g transform="translate(418.7,428.6)"><path d="M-5 -0.5l3-2.5 1 1.5 2-3 2.5 1.5-1 2 3 2-3 1.5-1 3-2-2-3 1z" fill="#12c8e6"/><rect x="1" y="-1.5" width="1.5" height="1.5" fill="#ff40ff"/></g><g transform="translate(472.0,388.4)"><path d="M-5 -0.5l3-2.5 1 1.5 2-3 2.5 1.5-1 2 3 2-3 1.5-1 3-2-2-3 1z" fill="#12c8e6"/><rect x="1" y="-1.5" width="1.5" height="1.5" fill="#ff40ff"/></g><g transform="translate(472.0,435.3)"><path d="M-5 -0.5l3-2.5 1 1.5 2-3 2.5 1.5-1 2 3 2-3 1.5-1 3-2-2-3 1z" fill="#12c8e6"/><rect x="1" y="-1.5" width="1.5" height="1.5" fill="#ff40ff"/></g><g transform="translate(525.3,401.7)"><path d="M-5 -0.5l3-2.5 1 1.5 2-3 2.5 1.5-1 2 3 2-3 1.5-1 3-2-2-3 1z" fill="#12c8e6"/><rect x="1" y="-1.5" width="1.5" height="1.5" fill="#ff40ff"/></g><g transform="translate(525.3,454.0)"><path d="M-5 -0.5l3-2.5 1 1.5 2-3 2.5 1.5-1 2 3 2-3 1.5-1 3-2-2-3 1z" fill="#12c8e6"/><rect x="1" y="-1.5" width="1.5" height="1.5" fill="#ff40ff"/></g><g transform="translate(578.7,415.1)"><path d="M-5 -0.5l3-2.5 1 1.5 2-3 2.5 1.5-1 2 3 2-3 1.5-1 3-2-2-3 1z" fill="#12c8e6"/><rect x="1" y="-1.5" width="1.5" height="1.5" fill="#ff40ff"/></g><g transform="translate(578.7,460.7)"><path d="M-5 -0.5l3-2.5 1 1.5 2-3 2.5 1.5-1 2 3 2-3 1.5-1 3-2-2-3 1z" fill="#12c8e6"/><rect x="1" y="-1.5" width="1.5" height="1.5" fill="#ff40ff"/></g><g transform="translate(632.0,428.6)"><path d="M-5 -0.5l3-2.5 1 1.5 2-3 2.5 1.5-1 2 3 2-3 1.5-1 3-2-2-3 1z" fill="#12c8e6"/><rect x="1" y="-1.5" width="1.5" height="1.5" fill="#ff40ff"/></g><g transform="translate(632.0,467.4)"><path d="M-5 -0.5l3-2.5 1 1.5 2-3 2.5 1.5-1 2 3 2-3 1.5-1 3-2-2-3 1z" fill="#12c8e6"/><rect x="1" y="-1.5" width="1.5" height="1.5" fill="#ff40ff"/></g><g transform="translate(630.0,578.2)"><path d="M-5 -0.5l3-2.5 1 1.5 2-3 2.5 1.5-1 2 3 2-3 1.5-1 3-2-2-3 1z" fill="#12c8e6"/><rect x="1" y="-1.5" width="1.5" height="1.5" fill="#ff40ff"/></g><g transform="translate(310.0,536.0)"><path d="M-5 -0.5l3-2.5 1 1.5 2-3 2.5 1.5-1 2 3 2-3 1.5-1 3-2-2-3 1z" fill="#12c8e6"/><rect x="1" y="-1.5" width="1.5" height="1.5" fill="#ff40ff"/></g><g transform="translate(630.0,547.6)"><path d="M-5 -0.5l3-2.5 1 1.5 2-3 2.5 1.5-1 2 3 2-3 1.5-1 3-2-2-3 1z" fill="#12c8e6"/><rect x="1" y="-1.5" width="1.5" height="1.5" fill="#ff40ff"/></g><g transform="translate(310.0,506.0)"><path d="M-5 -0.5l3-2.5 1 1.5 2-3 2.5 1.5-1 2 3 2-3 1.5-1 3-2-2-3 1z" fill="#12c8e6"/><rect x="1" y="-1.5" width="1.5" height="1.5" fill="#ff40ff"/></g><g transform="translate(630.0,518.0)"><path d="M-5 -0.5l3-2.5 1 1.5 2-3 2.5 1.5-1 2 3 2-3 1.5-1 3-2-2-3 1z" fill="#12c8e6"/><rect x="1" y="-1.5" width="1.5" height="1.5" fill="#ff40ff"/></g><g transform="translate(310.0,477.0)"><path d="M-5 -0.5l3-2.5 1 1.5 2-3 2.5 1.5-1 2 3 2-3 1.5-1 3-2-2-3 1z" fill="#12c8e6"/><rect x="1" y="-1.5" width="1.5" height="1.5" fill="#ff40ff"/></g><g transform="translate(630.0,488.4)"><path d="M-5 -0.5l3-2.5 1 1.5 2-3 2.5 1.5-1 2 3 2-3 1.5-1 3-2-2-3 1z" fill="#12c8e6"/><rect x="1" y="-1.5" width="1.5" height="1.5" fill="#ff40ff"/></g><g transform="translate(310.0,448.0)"><path d="M-5 -0.5l3-2.5 1 1.5 2-3 2.5 1.5-1 2 3 2-3 1.5-1 3-2-2-3 1z" fill="#12c8e6"/><rect x="1" y="-1.5" width="1.5" height="1.5" fill="#ff40ff"/></g><g transform="translate(630.0,458.8)"><path d="M-5 -0.5l3-2.5 1 1.5 2-3 2.5 1.5-1 2 3 2-3 1.5-1 3-2-2-3 1z" fill="#12c8e6"/><rect x="1" y="-1.5" width="1.5" height="1.5" fill="#ff40ff"/></g><g transform="translate(310.0,419.0)"><path d="M-5 -0.5l3-2.5 1 1.5 2-3 2.5 1.5-1 2 3 2-3 1.5-1 3-2-2-3 1z" fill="#12c8e6"/><rect x="1" y="-1.5" width="1.5" height="1.5" fill="#ff40ff"/></g><g transform="translate(430.3,223.9)"><path d="M-5 -0.5l3-2.5 1 1.5 2-3 2.5 1.5-1 2 3 2-3 1.5-1 3-2-2-3 1z" fill="#12c8e6"/><rect x="1" y="-1.5" width="1.5" height="1.5" fill="#ff40ff"/></g><g transform="translate(483.7,223.6)"><path d="M-5 -0.5l3-2.5 1 1.5 2-3 2.5 1.5-1 2 3 2-3 1.5-1 3-2-2-3 1z" fill="#12c8e6"/><rect x="1" y="-1.5" width="1.5" height="1.5" fill="#ff40ff"/></g><g transform="translate(537.0,223.3)"><path d="M-5 -0.5l3-2.5 1 1.5 2-3 2.5 1.5-1 2 3 2-3 1.5-1 3-2-2-3 1z" fill="#12c8e6"/><rect x="1" y="-1.5" width="1.5" height="1.5" fill="#ff40ff"/></g><g transform="translate(590.3,222.9)"><path d="M-5 -0.5l3-2.5 1 1.5 2-3 2.5 1.5-1 2 3 2-3 1.5-1 3-2-2-3 1z" fill="#12c8e6"/><rect x="1" y="-1.5" width="1.5" height="1.5" fill="#ff40ff"/></g><g transform="translate(643.7,236.2)"><path d="M-5 -0.5l3-2.5 1 1.5 2-3 2.5 1.5-1 2 3 2-3 1.5-1 3-2-2-3 1z" fill="#12c8e6"/><rect x="1" y="-1.5" width="1.5" height="1.5" fill="#ff40ff"/></g><g transform="translate(697.0,249.6)"><path d="M-5 -0.5l3-2.5 1 1.5 2-3 2.5 1.5-1 2 3 2-3 1.5-1 3-2-2-3 1z" fill="#12c8e6"/><rect x="1" y="-1.5" width="1.5" height="1.5" fill="#ff40ff"/></g><g transform="translate(750.3,263.1)"><path d="M-5 -0.5l3-2.5 1 1.5 2-3 2.5 1.5-1 2 3 2-3 1.5-1 3-2-2-3 1z" fill="#12c8e6"/><rect x="1" y="-1.5" width="1.5" height="1.5" fill="#ff40ff"/></g><g transform="translate(381.0,293.7)"><path d="M-5 -0.5l3-2.5 1 1.5 2-3 2.5 1.5-1 2 3 2-3 1.5-1 3-2-2-3 1z" fill="#12c8e6"/><rect x="1" y="-1.5" width="1.5" height="1.5" fill="#ff40ff"/></g><g transform="translate(434.4,293.4)"><path d="M-5 -0.5l3-2.5 1 1.5 2-3 2.5 1.5-1 2 3 2-3 1.5-1 3-2-2-3 1z" fill="#12c8e6"/><rect x="1" y="-1.5" width="1.5" height="1.5" fill="#ff40ff"/></g><g transform="translate(487.7,293.1)"><path d="M-5 -0.5l3-2.5 1 1.5 2-3 2.5 1.5-1 2 3 2-3 1.5-1 3-2-2-3 1z" fill="#12c8e6"/><rect x="1" y="-1.5" width="1.5" height="1.5" fill="#ff40ff"/></g><g transform="translate(541.0,292.7)"><path d="M-5 -0.5l3-2.5 1 1.5 2-3 2.5 1.5-1 2 3 2-3 1.5-1 3-2-2-3 1z" fill="#12c8e6"/><rect x="1" y="-1.5" width="1.5" height="1.5" fill="#ff40ff"/></g><g transform="translate(594.4,306.0)"><path d="M-5 -0.5l3-2.5 1 1.5 2-3 2.5 1.5-1 2 3 2-3 1.5-1 3-2-2-3 1z" fill="#12c8e6"/><rect x="1" y="-1.5" width="1.5" height="1.5" fill="#ff40ff"/></g><g transform="translate(647.7,319.4)"><path d="M-5 -0.5l3-2.5 1 1.5 2-3 2.5 1.5-1 2 3 2-3 1.5-1 3-2-2-3 1z" fill="#12c8e6"/><rect x="1" y="-1.5" width="1.5" height="1.5" fill="#ff40ff"/></g><g transform="translate(701.0,332.9)"><path d="M-5 -0.5l3-2.5 1 1.5 2-3 2.5 1.5-1 2 3 2-3 1.5-1 3-2-2-3 1z" fill="#12c8e6"/><rect x="1" y="-1.5" width="1.5" height="1.5" fill="#ff40ff"/></g><g transform="translate(331.7,363.5)"><path d="M-5 -0.5l3-2.5 1 1.5 2-3 2.5 1.5-1 2 3 2-3 1.5-1 3-2-2-3 1z" fill="#12c8e6"/><rect x="1" y="-1.5" width="1.5" height="1.5" fill="#ff40ff"/></g><g transform="translate(385.1,363.2)"><path d="M-5 -0.5l3-2.5 1 1.5 2-3 2.5 1.5-1 2 3 2-3 1.5-1 3-2-2-3 1z" fill="#12c8e6"/><rect x="1" y="-1.5" width="1.5" height="1.5" fill="#ff40ff"/></g><g transform="translate(438.4,362.9)"><path d="M-5 -0.5l3-2.5 1 1.5 2-3 2.5 1.5-1 2 3 2-3 1.5-1 3-2-2-3 1z" fill="#12c8e6"/><rect x="1" y="-1.5" width="1.5" height="1.5" fill="#ff40ff"/></g><g transform="translate(491.7,362.5)"><path d="M-5 -0.5l3-2.5 1 1.5 2-3 2.5 1.5-1 2 3 2-3 1.5-1 3-2-2-3 1z" fill="#12c8e6"/><rect x="1" y="-1.5" width="1.5" height="1.5" fill="#ff40ff"/></g><g transform="translate(545.1,375.8)"><path d="M-5 -0.5l3-2.5 1 1.5 2-3 2.5 1.5-1 2 3 2-3 1.5-1 3-2-2-3 1z" fill="#12c8e6"/><rect x="1" y="-1.5" width="1.5" height="1.5" fill="#ff40ff"/></g><g transform="translate(598.4,389.2)"><path d="M-5 -0.5l3-2.5 1 1.5 2-3 2.5 1.5-1 2 3 2-3 1.5-1 3-2-2-3 1z" fill="#12c8e6"/><rect x="1" y="-1.5" width="1.5" height="1.5" fill="#ff40ff"/></g><g transform="translate(651.7,402.7)"><path d="M-5 -0.5l3-2.5 1 1.5 2-3 2.5 1.5-1 2 3 2-3 1.5-1 3-2-2-3 1z" fill="#12c8e6"/><rect x="1" y="-1.5" width="1.5" height="1.5" fill="#ff40ff"/></g><rect x="463.9" y="179.0" width="6" height="7" fill="#e8e840"/><rect x="463.9" y="186.0" width="7" height="4" fill="#b8f0a0"/><g transform="translate(458.9,181.0)"><path d="M-9 -2h5v-3h8v2h6v6h-4v4h-6v-2h-4v3h-5z" fill="#12d0ee"/><rect x="-6" y="-5" width="3" height="3" fill="#ffff30"/><rect x="3" y="1" width="4" height="3" fill="#ffff30"/><rect x="-9" y="3" width="3" height="4" fill="#ff40ff"/><rect x="-1" y="-3" width="2" height="2" fill="#2030a0"/></g><g transform="translate(779.9,221.2)"><path d="M-9 -2h5v-3h8v2h6v6h-4v4h-6v-2h-4v3h-5z" fill="#12d0ee"/><rect x="-6" y="-5" width="3" height="3" fill="#ffff30"/><rect x="3" y="1" width="4" height="3" fill="#ffff30"/><rect x="-9" y="3" width="3" height="4" fill="#ff40ff"/><rect x="-1" y="-3" width="2" height="2" fill="#2030a0"/></g><g transform="translate(619.9,180.0)"><path d="M-9 -2h5v-3h8v2h6v6h-4v4h-6v-2h-4v3h-5z" fill="#12d0ee"/><rect x="-6" y="-5" width="3" height="3" fill="#ffff30"/><rect x="3" y="1" width="4" height="3" fill="#ffff30"/><rect x="-9" y="3" width="3" height="4" fill="#ff40ff"/><rect x="-1" y="-3" width="2" height="2" fill="#2030a0"/></g><rect x="414.6" y="248.8" width="6" height="7" fill="#e8e840"/><rect x="414.6" y="255.8" width="7" height="4" fill="#b8f0a0"/><g transform="translate(409.6,250.8)"><path d="M-9 -2h5v-3h8v2h6v6h-4v4h-6v-2h-4v3h-5z" fill="#12d0ee"/><rect x="-6" y="-5" width="3" height="3" fill="#ffff30"/><rect x="3" y="1" width="4" height="3" fill="#ffff30"/><rect x="-9" y="3" width="3" height="4" fill="#ff40ff"/><rect x="-1" y="-3" width="2" height="2" fill="#2030a0"/></g><g transform="translate(730.6,291.0)"><path d="M-9 -2h5v-3h8v2h6v6h-4v4h-6v-2h-4v3h-5z" fill="#12d0ee"/><rect x="-6" y="-5" width="3" height="3" fill="#ffff30"/><rect x="3" y="1" width="4" height="3" fill="#ffff30"/><rect x="-9" y="3" width="3" height="4" fill="#ff40ff"/><rect x="-1" y="-3" width="2" height="2" fill="#2030a0"/></g><g transform="translate(570.6,249.8)"><path d="M-9 -2h5v-3h8v2h6v6h-4v4h-6v-2h-4v3h-5z" fill="#12d0ee"/><rect x="-6" y="-5" width="3" height="3" fill="#ffff30"/><rect x="3" y="1" width="4" height="3" fill="#ffff30"/><rect x="-9" y="3" width="3" height="4" fill="#ff40ff"/><rect x="-1" y="-3" width="2" height="2" fill="#2030a0"/></g><rect x="365.3" y="318.6" width="6" height="7" fill="#e8e840"/><rect x="365.3" y="325.6" width="7" height="4" fill="#b8f0a0"/><g transform="translate(360.3,320.6)"><path d="M-9 -2h5v-3h8v2h6v6h-4v4h-6v-2h-4v3h-5z" fill="#12d0ee"/><rect x="-6" y="-5" width="3" height="3" fill="#ffff30"/><rect x="3" y="1" width="4" height="3" fill="#ffff30"/><rect x="-9" y="3" width="3" height="4" fill="#ff40ff"/><rect x="-1" y="-3" width="2" height="2" fill="#2030a0"/></g><g transform="translate(681.3,360.8)"><path d="M-9 -2h5v-3h8v2h6v6h-4v4h-6v-2h-4v3h-5z" fill="#12d0ee"/><rect x="-6" y="-5" width="3" height="3" fill="#ffff30"/><rect x="3" y="1" width="4" height="3" fill="#ffff30"/><rect x="-9" y="3" width="3" height="4" fill="#ff40ff"/><rect x="-1" y="-3" width="2" height="2" fill="#2030a0"/></g><g transform="translate(521.3,319.6)"><path d="M-9 -2h5v-3h8v2h6v6h-4v4h-6v-2h-4v3h-5z" fill="#12d0ee"/><rect x="-6" y="-5" width="3" height="3" fill="#ffff30"/><rect x="3" y="1" width="4" height="3" fill="#ffff30"/><rect x="-9" y="3" width="3" height="4" fill="#ff40ff"/><rect x="-1" y="-3" width="2" height="2" fill="#2030a0"/></g><rect x="316.0" y="388.4" width="6" height="7" fill="#e8e840"/><rect x="316.0" y="395.4" width="7" height="4" fill="#b8f0a0"/><g transform="translate(311.0,390.4)"><path d="M-9 -2h5v-3h8v2h6v6h-4v4h-6v-2h-4v3h-5z" fill="#12d0ee"/><rect x="-6" y="-5" width="3" height="3" fill="#ffff30"/><rect x="3" y="1" width="4" height="3" fill="#ffff30"/><rect x="-9" y="3" width="3" height="4" fill="#ff40ff"/><rect x="-1" y="-3" width="2" height="2" fill="#2030a0"/></g><g transform="translate(632.0,430.6)"><path d="M-9 -2h5v-3h8v2h6v6h-4v4h-6v-2h-4v3h-5z" fill="#12d0ee"/><rect x="-6" y="-5" width="3" height="3" fill="#ffff30"/><rect x="3" y="1" width="4" height="3" fill="#ffff30"/><rect x="-9" y="3" width="3" height="4" fill="#ff40ff"/><rect x="-1" y="-3" width="2" height="2" fill="#2030a0"/></g><g transform="translate(472.0,389.4)"><path d="M-9 -2h5v-3h8v2h6v6h-4v4h-6v-2h-4v3h-5z" fill="#12d0ee"/><rect x="-6" y="-5" width="3" height="3" fill="#ffff30"/><rect x="3" y="1" width="4" height="3" fill="#ffff30"/><rect x="-9" y="3" width="3" height="4" fill="#ff40ff"/><rect x="-1" y="-3" width="2" height="2" fill="#2030a0"/></g><line x1="302.0" y1="542.0" x2="340.0" y2="548.0" stroke="#6f8fcf" stroke-width="4" /><rect x="340.5" y="524.5" width="9.5" height="84.5" fill="#7d7a46"/><rect x="342" y="524.5" width="3.5" height="84.5" fill="#a29d60"/><path d="M282 508L288 503H303L297 508z" fill="#c8c27a"/><rect x="282" y="508" width="15" height="129" fill="#8f8a52"/><path d="M297 508L303 503V632L297 637z" fill="#6a6638"/><g transform="translate(345.0,524.0)"><path d="M-5 -0.5l3-2.5 1 1.5 2-3 2.5 1.5-1 2 3 2-3 1.5-1 3-2-2-3 1z" fill="#12c8e6"/><rect x="1" y="-1.5" width="1.5" height="1.5" fill="#ff40ff"/></g><g transform="translate(345.0,546.0)"><path d="M-5 -0.5l3-2.5 1 1.5 2-3 2.5 1.5-1 2 3 2-3 1.5-1 3-2-2-3 1z" fill="#12c8e6"/><rect x="1" y="-1.5" width="1.5" height="1.5" fill="#ff40ff"/></g><g transform="translate(290.0,506.0)"><path d="M-5 -0.5l3-2.5 1 1.5 2-3 2.5 1.5-1 2 3 2-3 1.5-1 3-2-2-3 1z" fill="#12c8e6"/><rect x="1" y="-1.5" width="1.5" height="1.5" fill="#ff40ff"/></g><g transform="translate(312.0,572.0)"><path d="M-5 -0.5l3-2.5 1 1.5 2-3 2.5 1.5-1 2 3 2-3 1.5-1 3-2-2-3 1z" fill="#12c8e6"/><rect x="1" y="-1.5" width="1.5" height="1.5" fill="#ff40ff"/></g><polygon points="884.9,341 924.1,337.6 914.6,343 994.4,354.1 985,356.8 910.6,347.7 913.6,354.9" fill="#ff0000"/><polygon points="994.4,354.5 970.1,390.3 987.7,388.3 956.6,400.9 948.2,382.9 959.3,389 982.3,357.2" fill="#00ff00"/><rect x="702" y="697" width="2" height="10" fill="#fff"/></g>
</svg></body></html>
